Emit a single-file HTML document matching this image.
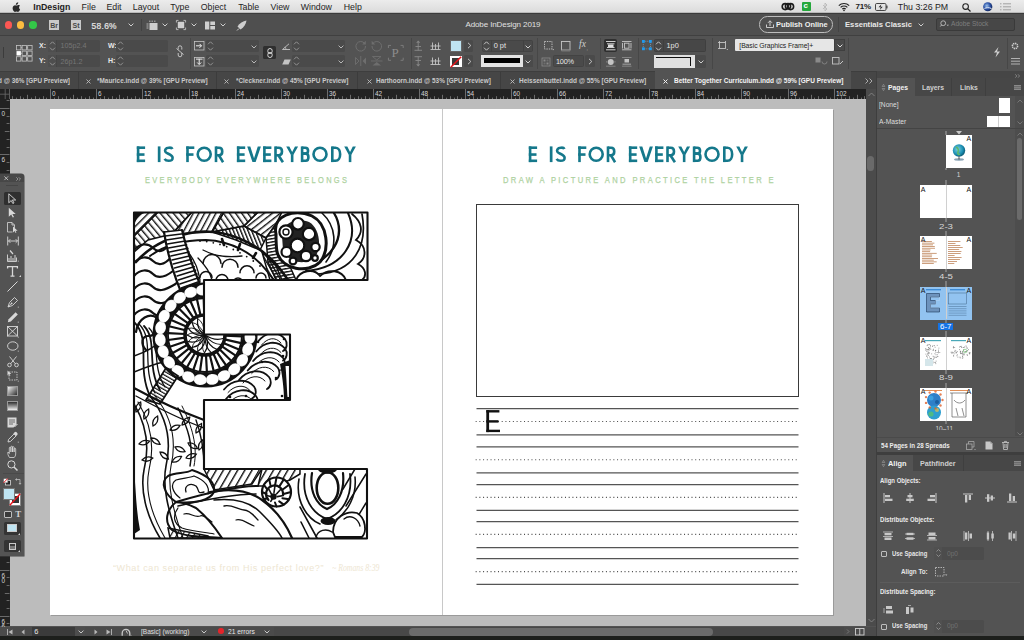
<!DOCTYPE html><html><head><meta charset="utf-8"><style>
*{margin:0;padding:0;box-sizing:border-box}
html,body{width:1024px;height:640px;overflow:hidden;background:#535353;font-family:"Liberation Sans",sans-serif}
.a{position:absolute}
.t{position:absolute;white-space:pre;line-height:1}
svg{position:absolute;overflow:visible}
</style></head><body><div class="a" style="left:0px;top:0px;width:1024px;height:13px;background:linear-gradient(#ececec,#dcdcdc);border-bottom:1px solid #b9b9b9"></div>
<svg style="left:12px;top:2px;" width="9" height="10" viewBox="0 0 9 10"><path d="M6.2 0.3c0.1 0.9-0.3 1.7-1 2.2-0.5 0.3-1 0.4-1.4 0.3 0-0.8 0.4-1.6 1-2 0.4-0.3 1-0.5 1.4-0.5zM7.9 3.6c-0.8-0.6-1.6-0.6-2.2-0.4-0.5 0.2-0.8 0.3-1.1 0.3-0.4 0-0.8-0.3-1.5-0.3C2 3.2 0.6 4.3 0.6 6.2c0 1.8 1.3 3.7 2.3 3.7 0.6 0 0.9-0.4 1.6-0.4 0.7 0 1 0.4 1.6 0.4 0.8 0 1.6-1.3 2-2.3-1.1-0.5-1.6-2.6-0.2-4z" fill="#2a2a2a"/></svg>
<div class="t" style="left:33.2px;top:3.2px;font-size:8.8px;color:#1e1e1e;font-weight:bold;width:36.099999999999994px;">InDesign</div>
<div class="t" style="left:81.6px;top:3.2px;font-size:8.8px;color:#1e1e1e;font-weight:normal;width:13.100000000000009px;">File</div>
<div class="t" style="left:106.4px;top:3.2px;font-size:8.8px;color:#1e1e1e;font-weight:normal;width:14.599999999999994px;">Edit</div>
<div class="t" style="left:132.8px;top:3.2px;font-size:8.8px;color:#1e1e1e;font-weight:normal;width:25.399999999999977px;">Layout</div>
<div class="t" style="left:170.3px;top:3.2px;font-size:8.8px;color:#1e1e1e;font-weight:normal;width:18.69999999999999px;">Type</div>
<div class="t" style="left:200.7px;top:3.2px;font-size:8.8px;color:#1e1e1e;font-weight:normal;width:25.80000000000001px;">Object</div>
<div class="t" style="left:238.2px;top:3.2px;font-size:8.8px;color:#1e1e1e;font-weight:normal;width:20.19999999999999px;">Table</div>
<div class="t" style="left:270.5px;top:3.2px;font-size:8.8px;color:#1e1e1e;font-weight:normal;width:18.5px;">View</div>
<div class="t" style="left:300.7px;top:3.2px;font-size:8.8px;color:#1e1e1e;font-weight:normal;width:31.30000000000001px;">Window</div>
<div class="t" style="left:343.7px;top:3.2px;font-size:8.8px;color:#1e1e1e;font-weight:normal;width:17.600000000000023px;">Help</div>
<div class="t" style="left:855.6px;top:3.4px;font-size:8px;color:#222;font-weight:bold;letter-spacing:-0.3px;">71%</div>
<div class="t" style="left:897.8px;top:3.2px;font-size:8.8px;color:#1e1e1e;font-weight:normal;">Thu 3:26 PM</div>
<svg style="left:781px;top:2px;" width="14" height="9" viewBox="0 0 14 9"><g fill="none" stroke="#1b1b1b" stroke-width="1.6"><circle cx="4.2" cy="4.6" r="3"/><circle cx="9.6" cy="4.6" r="3"/><circle cx="7" cy="4.2" r="2.6"/></g></svg>
<div class="a" style="left:801.5px;top:1.8px;width:9.5px;height:9.5px;background:#25a73c;border-radius:1px"></div>
<div class="t" style="left:803.6px;top:2.3px;font-size:8px;color:#fff;font-weight:bold;">c</div>
<svg style="left:822px;top:2px;" width="6" height="10" viewBox="0 0 6 10"><path d="M1 3l4 4-2 2V1l2 2-4 4" fill="none" stroke="#b9b9b9" stroke-width="0.9"/></svg>
<svg style="left:837.5px;top:2px;" width="12" height="9" viewBox="0 0 12 9"><g fill="none" stroke="#222" stroke-width="1.2"><path d="M0.8 3.6a7.5 7.5 0 0 1 10.4 0"/><path d="M2.6 5.4a5 5 0 0 1 6.8 0"/><path d="M4.3 7.1a2.4 2.4 0 0 1 3.4 0"/></g><circle cx="6" cy="8.4" r="0.8" fill="#222"/></svg>
<svg style="left:874.7px;top:2.5px;" width="13" height="8" viewBox="0 0 13 8"><rect x="0.5" y="0.5" width="10.5" height="7" rx="1.2" fill="none" stroke="#333" stroke-width="0.9"/><rect x="11.3" y="2.6" width="1.2" height="2.8" fill="#333"/><path d="M6.4 1.2L3.6 4.3h2.2L4.8 7l2.9-3.2H5.6z" fill="#222"/></svg>
<svg style="left:962.3px;top:2.5px;" width="9" height="9" viewBox="0 0 9 9"><circle cx="3.6" cy="3.6" r="2.8" fill="none" stroke="#222" stroke-width="1.1"/><path d="M5.6 5.6L8.5 8.5" stroke="#222" stroke-width="1.3"/></svg>
<svg style="left:983px;top:1.8px;" width="9.5" height="9.5" viewBox="0 0 9.5 9.5"><defs><radialGradient id="av" cx="0.4" cy="0.4" r="0.7"><stop offset="0" stop-color="#9ec3ea"/><stop offset="0.5" stop-color="#2b52a8"/><stop offset="1" stop-color="#0c1a45"/></radialGradient></defs><circle cx="4.75" cy="4.75" r="4.6" fill="url(#av)"/><path d="M1.5 6.5c1.5-1 4.5-1.2 7 0" stroke="#e8eef8" stroke-width="1" fill="none"/></svg>
<svg style="left:999.5px;top:3px;" width="11" height="8" viewBox="0 0 11 8"><g stroke="#9a9a9a" stroke-width="0.9"><path d="M0 0.8h1.5M3 0.8h8M0 3.8h1.5M3 3.8h8M0 6.8h1.5M3 6.8h8"/></g></svg>
<div class="a" style="left:0px;top:13px;width:1024px;height:22px;background:#4f4f4f;border-top:1px solid #3b3b3b"></div>
<div class="a" style="left:4.8px;top:21.3px;width:7.4px;height:7.4px;background:#fc5753;border-radius:50%"></div>
<div class="a" style="left:16.900000000000002px;top:21.3px;width:7.4px;height:7.4px;background:#fdbc40;border-radius:50%"></div>
<div class="a" style="left:29.3px;top:21.3px;width:7.4px;height:7.4px;background:#33c748;border-radius:50%"></div>
<div class="a" style="left:49px;top:20px;width:10.3px;height:9.5px;background:#c9c9c9"></div>
<div class="t" style="left:50.3px;top:21.9px;font-size:7px;color:#4a4a4a;font-weight:bold;">Br</div>
<div class="a" style="left:71.1px;top:20px;width:10.1px;height:9.5px;background:#c9c9c9"></div>
<div class="t" style="left:72.6px;top:21.9px;font-size:7px;color:#4a4a4a;font-weight:bold;">St</div>
<div class="t" style="left:91.6px;top:22px;font-size:8.4px;color:#e6e6e6;font-weight:normal;letter-spacing:0.3px;-webkit-text-stroke:0.2px #e6e6e6;">58.6%</div>
<svg style="left:128px;top:22.5px;" width="6" height="4" viewBox="0 0 6 4"><path d="M0.6 0.6L3 3 5.4 0.6" fill="none" stroke="#cfcfcf" stroke-width="1.0"/></svg>
<div class="a" style="left:141px;top:19px;width:1px;height:12px;background:#424242"></div>
<svg style="left:146.3px;top:19.5px;" width="12" height="11" viewBox="0 0 12 11"><rect x="3.5" y="3" width="8" height="7" fill="#cfcfcf"/><g stroke="#cfcfcf" stroke-width="0.8"><path d="M0.5 4h2M0.5 6h2M0.5 8h2M3 1.2h1.5M5.5 1.2h1.5M8 1.2h1.5"/></g></svg>
<svg style="left:161.5px;top:22.5px;" width="6" height="4" viewBox="0 0 6 4"><path d="M0.6 0.6L3 3 5.4 0.6" fill="none" stroke="#cfcfcf" stroke-width="1.0"/></svg>
<svg style="left:176.4px;top:20px;" width="10" height="10" viewBox="0 0 10 10"><rect x="1.8" y="1.8" width="6.4" height="6.4" fill="#cfcfcf"/><g stroke="#cfcfcf" stroke-width="0.8" fill="none"><path d="M0.4 2.5V0.4h2.1M7.5 0.4h2.1v2.1M9.6 7.5v2.1H7.5M2.5 9.6H0.4V7.5"/></g></svg>
<svg style="left:190.6px;top:22.5px;" width="6" height="4" viewBox="0 0 6 4"><path d="M0.6 0.6L3 3 5.4 0.6" fill="none" stroke="#cfcfcf" stroke-width="1.0"/></svg>
<svg style="left:205px;top:20.5px;" width="10" height="9" viewBox="0 0 10 9"><rect x="0" y="0.5" width="4.3" height="8" fill="#cfcfcf"/><rect x="5.3" y="0.5" width="4.7" height="3.5" fill="#cfcfcf"/><rect x="5.3" y="5" width="4.7" height="3.5" fill="#cfcfcf"/></svg>
<svg style="left:219.6px;top:22.5px;" width="6" height="4" viewBox="0 0 6 4"><path d="M0.6 0.6L3 3 5.4 0.6" fill="none" stroke="#cfcfcf" stroke-width="1.0"/></svg>
<svg style="left:235.5px;top:19.5px;" width="11" height="11" viewBox="0 0 11 11"><path d="M10.5 0.5C7 1 3.5 3 1.5 6.5l3 3C8 7.5 10 4 10.5 0.5z" fill="#cfcfcf"/><path d="M0.5 7.5l2.5 3" stroke="#4f4f4f" stroke-width="1.2"/><path d="M1 10.5l2-2" stroke="#cfcfcf" stroke-width="1"/></svg>
<div class="t" style="left:465.4px;top:20.8px;font-size:8.0px;color:#e0e0e0;font-weight:normal;width:77px;letter-spacing:-0.1px;">Adobe InDesign 2019</div>
<div class="a" style="left:758.8px;top:16px;width:74.7px;height:16.6px;border:1px solid #bdbdbd;border-radius:8.3px"></div>
<svg style="left:765.5px;top:19.8px;" width="8" height="8" viewBox="0 0 8 8"><g fill="none" stroke="#d8d8d8" stroke-width="0.9"><path d="M0.5 4.5v3h7v-3"/><path d="M4 6V0.8M2 2.8L4 0.8 6 2.8"/></g></svg>
<div class="t" style="left:776px;top:21.2px;font-size:7.6px;color:#f0f0f0;font-weight:bold;transform-origin:0 0;transform:scaleX(0.9704);">Publish Online</div>
<div class="a" style="left:837.5px;top:17px;width:1px;height:15px;background:#444"></div>
<div class="t" style="left:845px;top:21.0px;font-size:7.9px;color:#e8e8e8;font-weight:bold;transform-origin:0 0;transform:scaleX(0.9728);">Essentials Classic</div>
<svg style="left:917.5px;top:22.5px;" width="6" height="4" viewBox="0 0 6 4"><path d="M0.6 0.6L3 3 5.4 0.6" fill="none" stroke="#cfcfcf" stroke-width="1.0"/></svg>
<div class="a" style="left:936px;top:17.9px;width:79px;height:12.8px;background:#474747;border:1px solid #3a3a3a;border-radius:2px"></div>
<svg style="left:939.5px;top:20px;" width="10" height="8" viewBox="0 0 10 8"><circle cx="3.2" cy="3.2" r="2.4" fill="none" stroke="#bcbcbc" stroke-width="0.9"/><path d="M1.6 5L0.3 6.5" stroke="#bcbcbc" stroke-width="1"/><path d="M6.5 4.8l1.3 1.2 1.3-1.2z" fill="#bcbcbc"/></svg>
<div class="t" style="left:951px;top:20.9px;font-size:6.6px;color:#7e7e7e;font-weight:normal;">Adobe Stock</div>
<div class="a" style="left:0px;top:35px;width:1024px;height:36px;background:#535353;border-top:1px solid #404040"></div>
<div class="a" style="left:3px;top:46.7px;width:1px;height:11.7px;background:#3c3c3c"></div>
<svg style="left:16px;top:44.7px;" width="16" height="16" viewBox="0 0 16 16"><rect x="0.5" y="0.5" width="4.4" height="4.4" fill="none" stroke="#c4c4c4" stroke-width="0.8"/><rect x="0.5" y="6.1" width="4.4" height="4.4" fill="#fff"/><rect x="0.5" y="11.7" width="4.4" height="4.4" fill="none" stroke="#c4c4c4" stroke-width="0.8"/><rect x="6.1" y="0.5" width="4.4" height="4.4" fill="none" stroke="#c4c4c4" stroke-width="0.8"/><rect x="6.1" y="6.1" width="4.4" height="4.4" fill="none" stroke="#c4c4c4" stroke-width="0.8"/><rect x="6.1" y="11.7" width="4.4" height="4.4" fill="none" stroke="#c4c4c4" stroke-width="0.8"/><rect x="11.7" y="0.5" width="4.4" height="4.4" fill="none" stroke="#c4c4c4" stroke-width="0.8"/><rect x="11.7" y="6.1" width="4.4" height="4.4" fill="none" stroke="#c4c4c4" stroke-width="0.8"/><rect x="11.7" y="11.7" width="4.4" height="4.4" fill="none" stroke="#c4c4c4" stroke-width="0.8"/><path d="M4.9 2.7h1.2" stroke="#c4c4c4" stroke-width="0.8"/><path d="M10.5 2.7h1.2" stroke="#c4c4c4" stroke-width="0.8"/><path d="M4.9 8.3h1.2" stroke="#c4c4c4" stroke-width="0.8"/><path d="M10.5 8.3h1.2" stroke="#c4c4c4" stroke-width="0.8"/><path d="M4.9 13.899999999999999h1.2" stroke="#c4c4c4" stroke-width="0.8"/><path d="M10.5 13.899999999999999h1.2" stroke="#c4c4c4" stroke-width="0.8"/></svg>
<div class="t" style="left:39px;top:42.3px;font-size:7px;color:#e8e8e8;font-weight:bold;">X:</div>
<div class="t" style="left:39px;top:56.8px;font-size:7px;color:#e8e8e8;font-weight:bold;">Y:</div>
<div class="a" style="left:47.5px;top:39.5px;width:52.1px;height:12px;background:#4a4a4a;border-radius:1.5px"></div>
<div class="a" style="left:47.5px;top:39.5px;width:9.1px;height:12px;background:#4e4e4e;border-right:1px solid #454545"></div>
<div class="a" style="left:47.5px;top:55.2px;width:52.1px;height:12px;background:#4a4a4a;border-radius:1.5px"></div>
<div class="a" style="left:47.5px;top:55.2px;width:9.1px;height:12px;background:#4e4e4e;border-right:1px solid #454545"></div>
<svg style="left:47.5px;top:39.5px;" width="9" height="12" viewBox="0 0 9 12"><g fill="none" stroke="#9a9a9a" stroke-width="0.9"><path d="M2 4.3L4.5 1.8 7 4.3M2 7.7L4.5 10.2 7 7.7"/></g></svg>
<svg style="left:47.5px;top:55.2px;" width="9" height="12" viewBox="0 0 9 12"><g fill="none" stroke="#9a9a9a" stroke-width="0.9"><path d="M2 4.3L4.5 1.8 7 4.3M2 7.7L4.5 10.2 7 7.7"/></g></svg>
<div class="t" style="left:60.5px;top:42.3px;font-size:7.2px;color:#767676;font-weight:normal;">105p2.4</div>
<div class="t" style="left:60.5px;top:58px;font-size:7.2px;color:#767676;font-weight:normal;">26p1.2</div>
<div class="t" style="left:108px;top:42.3px;font-size:7px;color:#e8e8e8;font-weight:bold;">W:</div>
<div class="t" style="left:108px;top:56.8px;font-size:7px;color:#e8e8e8;font-weight:bold;">H:</div>
<div class="a" style="left:116.2px;top:39.5px;width:51.8px;height:12px;background:#4a4a4a;border-radius:1.5px"></div>
<div class="a" style="left:116.2px;top:55.2px;width:51.8px;height:12px;background:#4a4a4a;border-radius:1.5px"></div>
<svg style="left:116.2px;top:39.5px;" width="9" height="12" viewBox="0 0 9 12"><g fill="none" stroke="#9a9a9a" stroke-width="0.9"><path d="M2 4.3L4.5 1.8 7 4.3M2 7.7L4.5 10.2 7 7.7"/></g></svg>
<svg style="left:116.2px;top:55.2px;" width="9" height="12" viewBox="0 0 9 12"><g fill="none" stroke="#9a9a9a" stroke-width="0.9"><path d="M2 4.3L4.5 1.8 7 4.3M2 7.7L4.5 10.2 7 7.7"/></g></svg>
<svg style="left:175.5px;top:44.5px;" width="8" height="13" viewBox="0 0 8 13"><g fill="none" stroke="#c4c4c4" stroke-width="1"><path d="M2.2 4.5V2.6a1.8 1.8 0 0 1 3.6 0v2M2.2 8v2a1.8 1.8 0 0 0 3.6 0V8"/><path d="M0.5 3.5L7.5 9.5"/></g></svg>
<div class="a" style="left:189.9px;top:38px;width:1px;height:31px;background:#474747"></div>
<svg style="left:193.8px;top:40.8px;" width="10.5" height="9.5" viewBox="0 0 10.5 9.5"><rect x="0.5" y="0.5" width="9.5" height="8.5" fill="none" stroke="#c4c4c4" stroke-width="0.8"/><path d="M2 4.8h5.5M5.5 2.8l2 2-2 2" fill="none" stroke="#eee" stroke-width="1"/></svg>
<svg style="left:193.8px;top:56.8px;" width="10.5" height="9.5" viewBox="0 0 10.5 9.5"><rect x="0.5" y="0.5" width="9.5" height="8.5" fill="none" stroke="#c4c4c4" stroke-width="0.8"/><path d="M5.2 1.8v5.5M3.2 5.5l2 2 2-2" fill="none" stroke="#eee" stroke-width="1"/><rect x="2" y="1.6" width="6.5" height="1" fill="#eee"/></svg>
<div class="a" style="left:206px;top:39.5px;width:52.8px;height:12px;background:#4a4a4a;border-radius:1.5px"></div>
<div class="a" style="left:206px;top:55px;width:52.8px;height:12px;background:#4a4a4a;border-radius:1.5px"></div>
<svg style="left:206px;top:39.5px;" width="9" height="12" viewBox="0 0 9 12"><g fill="none" stroke="#9a9a9a" stroke-width="0.9"><path d="M2 4.3L4.5 1.8 7 4.3M2 7.7L4.5 10.2 7 7.7"/></g></svg>
<svg style="left:206px;top:55px;" width="9" height="12" viewBox="0 0 9 12"><g fill="none" stroke="#9a9a9a" stroke-width="0.9"><path d="M2 4.3L4.5 1.8 7 4.3M2 7.7L4.5 10.2 7 7.7"/></g></svg>
<svg style="left:250.8px;top:44.5px;" width="6" height="4" viewBox="0 0 6 4"><path d="M0.6 0.6L3 3 5.4 0.6" fill="none" stroke="#b8b8b8" stroke-width="1.0"/></svg>
<svg style="left:250.8px;top:59.5px;" width="6" height="4" viewBox="0 0 6 4"><path d="M0.6 0.6L3 3 5.4 0.6" fill="none" stroke="#b8b8b8" stroke-width="1.0"/></svg>
<div class="a" style="left:263px;top:46px;width:12.8px;height:13.4px;background:#2f2f2f;border-radius:1.5px"></div>
<svg style="left:266.5px;top:47.8px;" width="6" height="10" viewBox="0 0 6 10"><g fill="none" stroke="#e8e8e8" stroke-width="0.9"><rect x="0.8" y="0.5" width="4.4" height="5" rx="2.2"/><rect x="0.8" y="4.5" width="4.4" height="5" rx="2.2"/></g></svg>
<svg style="left:281.5px;top:42.5px;" width="8.5" height="7" viewBox="0 0 8.5 7"><path d="M0.5 6.5h7.5M0.5 6.5L7 0.8" fill="none" stroke="#c4c4c4" stroke-width="0.9"/><path d="M4 6.5a3.5 3.5 0 0 0-1.2-2.6" fill="none" stroke="#c4c4c4" stroke-width="0.8"/></svg>
<svg style="left:281.5px;top:58.5px;" width="9" height="6" viewBox="0 0 9 6"><path d="M2.5 0.5H8.8L6.5 5.5H0.2z" fill="#c4c4c4"/></svg>
<div class="a" style="left:292.4px;top:39.5px;width:53.1px;height:12px;background:#4a4a4a;border-radius:1.5px"></div>
<div class="a" style="left:292.4px;top:55px;width:53.1px;height:12px;background:#4a4a4a;border-radius:1.5px"></div>
<svg style="left:292.4px;top:39.5px;" width="9" height="12" viewBox="0 0 9 12"><g fill="none" stroke="#9a9a9a" stroke-width="0.9"><path d="M2 4.3L4.5 1.8 7 4.3M2 7.7L4.5 10.2 7 7.7"/></g></svg>
<svg style="left:292.4px;top:55px;" width="9" height="12" viewBox="0 0 9 12"><g fill="none" stroke="#9a9a9a" stroke-width="0.9"><path d="M2 4.3L4.5 1.8 7 4.3M2 7.7L4.5 10.2 7 7.7"/></g></svg>
<svg style="left:337.5px;top:44.5px;" width="6" height="4" viewBox="0 0 6 4"><path d="M0.6 0.6L3 3 5.4 0.6" fill="none" stroke="#b8b8b8" stroke-width="1.0"/></svg>
<svg style="left:337.5px;top:59.5px;" width="6" height="4" viewBox="0 0 6 4"><path d="M0.6 0.6L3 3 5.4 0.6" fill="none" stroke="#b8b8b8" stroke-width="1.0"/></svg>
<svg style="left:354.5px;top:40px;" width="11.5" height="11.5" viewBox="0 0 11.5 11.5"><path d="M9.6 3.5A4.8 4.8 0 1 0 10.5 6" fill="none" stroke="#6e6e6e" stroke-width="1"/><path d="M10.8 0.8v3.6H7.2z" fill="#6e6e6e"/></svg>
<svg style="left:370.5px;top:40px;" width="11.5" height="11.5" viewBox="0 0 11.5 11.5"><path d="M1.9 3.5A4.8 4.8 0 1 1 1 6" fill="none" stroke="#6e6e6e" stroke-width="1"/><path d="M0.7 0.8v3.6h3.6z" fill="#6e6e6e"/></svg>
<svg style="left:354.5px;top:56px;" width="11.5" height="10" viewBox="0 0 11.5 10"><g fill="none" stroke="#6e6e6e" stroke-width="0.9"><path d="M5.75 0v10M0.5 1.5v7l3.5-3.5z"/></g><path d="M11 1.5v7L7.5 5z" fill="#6e6e6e"/></svg>
<svg style="left:370.5px;top:56px;" width="11.5" height="10" viewBox="0 0 11.5 10"><g fill="none" stroke="#6e6e6e" stroke-width="0.9"><path d="M0 5h11.5M1.5 0.5h8.5L5.75 4z"/></g><path d="M1.5 9.5h8.5L5.75 6z" fill="#6e6e6e"/></svg>
<svg style="left:387.8px;top:44.7px;" width="15.6" height="15.7" viewBox="0 0 15.6 15.7"><g fill="none" stroke="#858585" stroke-width="0.8"><path d="M0.4 3V0.4H3M12.6 0.4h2.6V3M15.2 12.7v2.6h-2.6M3 15.3H0.4v-2.6"/></g></svg>
<div class="t" style="left:391.5px;top:45.8px;font-size:13px;color:#8c8c8c;font-weight:normal;font-family:'Liberation Serif';">P</div>
<div class="a" style="left:411px;top:38px;width:1px;height:31px;background:#474747"></div>
<svg style="left:414px;top:40px;" width="8.5" height="11" viewBox="0 0 8.5 11"><path d="M4.2 0.5l2 2.2h-4z" fill="#8a8a8a"/><g stroke="#8a8a8a" stroke-width="0.9" fill="none"><path d="M4.2 3v7.5M1.5 6.5h5.5M0.5 10.3h7.5"/></g></svg>
<svg style="left:429.8px;top:42px;" width="11" height="8" viewBox="0 0 11 8"><g stroke="#c4c4c4" stroke-width="0.9" fill="none"><path d="M2.5 0.5v7M5.5 2v5.5M8.5 0.5v7M0.5 4h10M0.5 7.5h10"/></g></svg>
<svg style="left:414px;top:56px;" width="8.5" height="11" viewBox="0 0 8.5 11"><path d="M4.2 10.5l2-2.2h-4z" fill="#8a8a8a"/><g stroke="#8a8a8a" stroke-width="0.9" fill="none"><path d="M4.2 0.5v7.5M1.5 4.5h5.5M0.5 0.7h7.5"/></g></svg>
<svg style="left:429.8px;top:57px;" width="11" height="8" viewBox="0 0 11 8"><g stroke="#c4c4c4" stroke-width="0.9" fill="none"><path d="M2.5 0.5v7M5.5 2v5.5M8.5 0.5v7M0.5 4h10M0.5 7.5h10"/></g></svg>
<div class="a" style="left:449.7px;top:39.5px;width:11.9px;height:12.1px;background:#bfe4f2;border:1px solid #666"></div>
<div class="a" style="left:464.4px;top:39.5px;width:9px;height:12px;background:#4a4a4a;border-radius:1.5px"></div>
<svg style="left:467px;top:42px;" width="5" height="7" viewBox="0 0 5 7"><path d="M1 0.8L3.8 3.5 1 6.2" fill="none" stroke="#d0d0d0" stroke-width="0.9"/></svg>
<div class="a" style="left:449.7px;top:55.5px;width:11.9px;height:11.7px;background:#fff"></div>
<div class="a" style="left:452.2px;top:58px;width:7px;height:6.8px;background:#3a3a3a"></div>
<svg style="left:449.7px;top:55.5px;" width="12" height="12" viewBox="0 0 12 12"><path d="M0.8 11.2L11.2 0.8" stroke="#e8141b" stroke-width="1.5"/></svg>
<div class="a" style="left:464.4px;top:55.2px;width:9px;height:12px;background:#4a4a4a;border-radius:1.5px"></div>
<svg style="left:467px;top:57.8px;" width="5" height="7" viewBox="0 0 5 7"><path d="M1 0.8L3.8 3.5 1 6.2" fill="none" stroke="#d0d0d0" stroke-width="0.9"/></svg>
<div class="a" style="left:481.6px;top:39.5px;width:51.7px;height:12px;background:#4a4a4a;border-radius:1.5px;border:1px solid #434343"></div>
<div class="a" style="left:491px;top:39.5px;width:1px;height:12px;background:#414141"></div>
<div class="a" style="left:522.6px;top:39.5px;width:1px;height:12px;background:#414141"></div>
<svg style="left:482.4px;top:39.5px;" width="9" height="12" viewBox="0 0 9 12"><g fill="none" stroke="#cfcfcf" stroke-width="0.9"><path d="M2 4.3L4.5 1.8 7 4.3M2 7.7L4.5 10.2 7 7.7"/></g></svg>
<div class="t" style="left:493.7px;top:42.2px;font-size:7.4px;color:#e6e6e6;font-weight:normal;">0 pt</div>
<svg style="left:525px;top:44.5px;" width="6" height="4" viewBox="0 0 6 4"><path d="M0.6 0.6L3 3 5.4 0.6" fill="none" stroke="#cfcfcf" stroke-width="1.0"/></svg>
<div class="a" style="left:481px;top:55.2px;width:41.6px;height:12.3px;background:#e3e3e3"></div>
<div class="a" style="left:483.5px;top:58.3px;width:36.5px;height:5px;background:#000"></div>
<div class="a" style="left:522.6px;top:55.2px;width:10.7px;height:12.3px;background:#4a4a4a"></div>
<svg style="left:525px;top:59.5px;" width="6" height="4" viewBox="0 0 6 4"><path d="M0.6 0.6L3 3 5.4 0.6" fill="none" stroke="#cfcfcf" stroke-width="1.0"/></svg>
<div class="a" style="left:537.2px;top:38px;width:1px;height:31px;background:#474747"></div>
<svg style="left:543.5px;top:41px;" width="10" height="10" viewBox="0 0 10 10"><g fill="none" stroke="#c4c4c4" stroke-width="0.9" stroke-dasharray="1.4 1"><rect x="0.5" y="0.5" width="7.5" height="7.5"/></g><path d="M8.6 8.6h1.2" stroke="#c4c4c4"/></svg>
<svg style="left:560.7px;top:40.5px;" width="9.5" height="11" viewBox="0 0 9.5 11"><rect x="0.5" y="0.5" width="8.5" height="8.5" fill="none" stroke="#c4c4c4" stroke-width="0.9"/><rect x="0.5" y="8.5" width="8.5" height="2" fill="#777"/></svg>
<div class="t" style="left:579px;top:40.3px;font-size:9.5px;color:#d0d0d0;font-weight:normal;font-style:italic;font-family:'Liberation Serif';">fx</div>
<div class="t" style="left:586.5px;top:46px;font-size:5px;color:#bdbdbd;font-weight:normal;">,</div>
<svg style="left:542px;top:57.5px;" width="8" height="8" viewBox="0 0 8 8"><g fill="#8a8a8a"><rect x="0" y="0" width="8" height="8" fill="none" stroke="#8a8a8a" stroke-width="0.8"/><rect x="1.5" y="1.5" width="2" height="2"/><rect x="4.5" y="4.5" width="2" height="2"/><rect x="4.5" y="1.5" width="2" height="2" opacity="0.5"/><rect x="1.5" y="4.5" width="2" height="2" opacity="0.5"/></g></svg>
<div class="a" style="left:553.3px;top:55px;width:30.7px;height:12.4px;background:#4a4a4a;border-radius:1.5px;border:1px solid #434343"></div>
<div class="t" style="left:556px;top:58px;font-size:7.3px;color:#e6e6e6;font-weight:normal;letter-spacing:-0.2px;">100%</div>
<div class="a" style="left:585px;top:55px;width:10px;height:12.4px;background:#4a4a4a;border-radius:1.5px"></div>
<svg style="left:587.5px;top:58px;" width="5" height="7" viewBox="0 0 5 7"><path d="M1 0.8L3.8 3.5 1 6.2" fill="none" stroke="#d0d0d0" stroke-width="0.9"/></svg>
<div class="a" style="left:599.6px;top:38px;width:1px;height:31px;background:#474747"></div>
<div class="a" style="left:603.5px;top:38.9px;width:13.1px;height:12.7px;background:#2f2f2f;border-radius:2px"></div>
<svg style="left:605.5px;top:40.5px;" width="9.5" height="9.5" viewBox="0 0 9.5 9.5"><g stroke="#e0e0e0" stroke-width="0.9"><path d="M0 0.5h9.5M0 8.8h9.5M1 2.8h7.5M1 6.5h7.5"/></g><rect x="2" y="3.5" width="5.5" height="2.5" fill="#e0e0e0"/></svg>
<svg style="left:622px;top:40.5px;" width="9.5" height="9.5" viewBox="0 0 9.5 9.5"><g stroke="#c4c4c4" stroke-width="0.9" fill="none"><path d="M0 0.5h9.5M0 8.8h9.5M0.5 2v5.5M9 2v5.5"/><rect x="2.5" y="2.2" width="4.5" height="5"/></g></svg>
<svg style="left:606px;top:56.5px;" width="9.5" height="10" viewBox="0 0 9.5 10"><g stroke="#8a8a8a" stroke-width="0.9"><path d="M0 0.5h9.5M0 9.2h9.5"/></g><circle cx="4.75" cy="4.9" r="3" fill="#c4c4c4"/><path d="M0 4.9h1.2M8.3 4.9h1.2" stroke="#8a8a8a"/></svg>
<svg style="left:622px;top:56.5px;" width="9.5" height="10" viewBox="0 0 9.5 10"><g stroke="#8a8a8a" stroke-width="0.9"><path d="M0 0.5h9.5M0 9.2h9.5"/></g><rect x="2.5" y="2" width="4.5" height="3.5" fill="#c4c4c4"/><rect x="0.5" y="6.5" width="8.5" height="1.6" fill="#8a8a8a"/></svg>
<div class="a" style="left:637.7px;top:38px;width:1px;height:31px;background:#474747"></div>
<svg style="left:641.6px;top:40px;" width="10" height="10.5" viewBox="0 0 10 10.5"><rect x="1.3" y="1.3" width="7.2" height="7.6" fill="none" stroke="#8fb6d6" stroke-width="0.6" stroke-dasharray="1 1"/><g fill="#1e9bf0"><rect x="0" y="0" width="2.8" height="2.8"/><rect x="7" y="0" width="2.8" height="2.8"/><rect x="0" y="7.4" width="2.8" height="2.8"/><rect x="7" y="7.4" width="2.8" height="2.8"/></g></svg>
<div class="a" style="left:653.7px;top:39.2px;width:52.3px;height:12.6px;background:#474747;border-radius:1.5px;border:1px solid #3f3f3f"></div>
<div class="a" style="left:663px;top:39.2px;width:1px;height:12.6px;background:#3f3f3f"></div>
<svg style="left:654.2px;top:39.5px;" width="9" height="12" viewBox="0 0 9 12"><g fill="none" stroke="#cfcfcf" stroke-width="0.9"><path d="M2 4.3L4.5 1.8 7 4.3M2 7.7L4.5 10.2 7 7.7"/></g></svg>
<div class="t" style="left:666.5px;top:42.4px;font-size:7.4px;color:#e6e6e6;font-weight:normal;">1p0</div>
<div class="a" style="left:653.7px;top:55px;width:41.6px;height:12.7px;background:#e0e0e0"></div>
<div class="a" style="left:655.7px;top:57px;width:35px;height:9px;border:1px solid #111;border-left:none;border-bottom:none;background:linear-gradient(#e0e0e0,#e0e0e0)"></div>
<div class="a" style="left:689.7px;top:57px;width:1.5px;height:9px;background:#111"></div>
<div class="a" style="left:695.3px;top:55px;width:10.7px;height:12.7px;background:#4a4a4a;border-radius:1.5px"></div>
<svg style="left:697.8px;top:59.5px;" width="6" height="4" viewBox="0 0 6 4"><path d="M0.6 0.6L3 3 5.4 0.6" fill="none" stroke="#cfcfcf" stroke-width="1.0"/></svg>
<div class="a" style="left:711.9px;top:38px;width:1px;height:31px;background:#474747"></div>
<svg style="left:717.7px;top:40.5px;" width="10" height="10" viewBox="0 0 10 10"><g fill="none" stroke="#c4c4c4" stroke-width="0.9"><rect x="1.5" y="1.5" width="6" height="6"/><path d="M0 1.5h1.5M0 7.5h1.5M7.5 0v1.5M1.5 0v1.5"/></g><path d="M8.8 8.5h1" stroke="#c4c4c4"/></svg>
<div class="a" style="left:734.8px;top:39.3px;width:99.5px;height:11.9px;background:#e6e6e6;border-radius:1px"></div>
<div class="t" style="left:739.3px;top:42.8px;font-size:6.8px;color:#222;font-weight:normal;letter-spacing:-0.05px;">[Basic Graphics Frame]+</div>
<div class="a" style="left:834.3px;top:39.3px;width:10.4px;height:11.9px;background:#4a4a4a;border:1px solid #3f3f3f"></div>
<svg style="left:836.5px;top:43.5px;" width="6" height="4" viewBox="0 0 6 4"><path d="M0.6 0.6L3 3 5.4 0.6" fill="none" stroke="#dedede" stroke-width="1.0"/></svg>
<svg style="left:815px;top:57px;" width="13" height="7" viewBox="0 0 13 7"><rect x="0.5" y="0.5" width="5" height="5" fill="#8a8a8a"/><path d="M7 4.5a2.5 2.5 0 1 0 5 0" fill="none" stroke="#8a8a8a" stroke-width="0.8"/></svg>
<svg style="left:832px;top:56.5px;" width="12" height="8" viewBox="0 0 12 8"><rect x="0.5" y="0.5" width="6.5" height="6.5" fill="none" stroke="#c4c4c4" stroke-width="0.9"/><path d="M8 7l3-3" stroke="#c4c4c4" stroke-width="1"/></svg>
<div class="a" style="left:847.7px;top:38px;width:1px;height:31px;background:#474747"></div>
<svg style="left:993px;top:47.4px;" width="8" height="10.5" viewBox="0 0 8 10.5"><path d="M5.5 0L1 5.5h3L2.5 10.5 7 4.5H4z" fill="#cfcfcf"/></svg>
<div class="a" style="left:1006.5px;top:38px;width:1px;height:31px;background:#474747"></div>
<svg style="left:1011px;top:41.5px;" width="8" height="8" viewBox="0 0 8 8"><circle cx="4" cy="4" r="2.6" fill="none" stroke="#cfcfcf" stroke-width="1.6" stroke-dasharray="1.3 0.7"/><circle cx="4" cy="4" r="1.1" fill="#535353"/></svg>
<svg style="left:1010.5px;top:58px;" width="9" height="7" viewBox="0 0 9 7"><g stroke="#bdbdbd" stroke-width="0.9"><path d="M0 0.5h9M0 3.2h9M0 6h9"/></g></svg>
<div class="a" style="left:0px;top:71px;width:877px;height:18px;background:#464646;border-top:1px solid #3e3e3e"></div>
<div class="a" style="left:0px;top:78px;width:69.7px;height:10px;overflow:hidden">
<div class="t" style="left:-2.3px;top:0px;font-size:6.6px;color:#c9c9c9;font-weight:bold;transform-origin:0 0;transform:scaleX(0.9652);">d @ 36% [GPU Preview]</div>
</div>
<div class="a" style="left:77.6px;top:72px;width:1px;height:17px;background:#3c3c3c"></div>
<svg style="left:85.8px;top:78.5px;" width="5" height="5" viewBox="0 0 5 5"><path d="M0.5 0.5l4 4M4.5 0.5l-4 4" stroke="#bdbdbd" stroke-width="0.9"/></svg>
<div class="t" style="left:96.7px;top:78px;font-size:6.6px;color:#c9c9c9;font-weight:bold;transform-origin:0 0;transform:scaleX(0.9728);">*Maurice.indd @ 39% [GPU Preview]</div>
<div class="a" style="left:216.2px;top:72px;width:1px;height:17px;background:#3c3c3c"></div>
<svg style="left:224.1px;top:78.5px;" width="5" height="5" viewBox="0 0 5 5"><path d="M0.5 0.5l4 4M4.5 0.5l-4 4" stroke="#bdbdbd" stroke-width="0.9"/></svg>
<div class="t" style="left:235.9px;top:78px;font-size:6.6px;color:#c9c9c9;font-weight:bold;transform-origin:0 0;transform:scaleX(0.9658);">*Cleckner.indd @ 45% [GPU Preview]</div>
<div class="a" style="left:357px;top:72px;width:1px;height:17px;background:#3c3c3c"></div>
<svg style="left:366.5px;top:78.5px;" width="5" height="5" viewBox="0 0 5 5"><path d="M0.5 0.5l4 4M4.5 0.5l-4 4" stroke="#bdbdbd" stroke-width="0.9"/></svg>
<div class="t" style="left:376.2px;top:78px;font-size:6.6px;color:#c9c9c9;font-weight:bold;transform-origin:0 0;transform:scaleX(0.9713);">Harthoorn.indd @ 53% [GPU Preview]</div>
<div class="a" style="left:500px;top:72px;width:1px;height:17px;background:#3c3c3c"></div>
<svg style="left:509.5px;top:78.5px;" width="5" height="5" viewBox="0 0 5 5"><path d="M0.5 0.5l4 4M4.5 0.5l-4 4" stroke="#bdbdbd" stroke-width="0.9"/></svg>
<div class="t" style="left:519.2px;top:78px;font-size:6.6px;color:#c9c9c9;font-weight:bold;transform-origin:0 0;transform:scaleX(0.9811);">Heissenbuttel.indd @ 55% [GPU Preview]</div>
<div class="a" style="left:655px;top:72px;width:1px;height:17px;background:#3c3c3c"></div>
<div class="a" style="left:655px;top:71px;width:195.5px;height:18px;background:#535353"></div>
<svg style="left:663px;top:78.5px;" width="5" height="5" viewBox="0 0 5 5"><path d="M0.5 0.5l4 4M4.5 0.5l-4 4" stroke="#f0f0f0" stroke-width="1"/></svg>
<div class="t" style="left:673.8px;top:78px;font-size:6.6px;color:#f4f4f4;font-weight:bold;transform-origin:0 0;transform:scaleX(0.9853);">Better Together Curriculum.indd @ 59% [GPU Preview]</div>
<svg style="left:865px;top:77.5px;" width="8" height="6" viewBox="0 0 8 6"><path d="M0.5 0.5L3 3 0.5 5.5M4.5 0.5L7 3 4.5 5.5" fill="none" stroke="#b5b5b5" stroke-width="0.9"/></svg>
<div class="a" style="left:0px;top:89px;width:866px;height:10px;background:#222"></div>
<div class="a" style="left:0px;top:99px;width:9.5px;height:527px;background:#222"></div>
<svg style="left:0px;top:89px;" width="10" height="10" viewBox="0 0 10 10"><g stroke="#6a6a6a" stroke-width="0.8"><path d="M0 5.2h9.5M5.2 0v10M9.5 0v10"/></g></svg>
<svg style="left:0px;top:89px;" width="866" height="10" viewBox="0 0 866 10"><g stroke="#6c6c6c" stroke-width="1"><path d="M12.50 7.2v2.8"/><path d="M16.50 8.6v1.4"/><path d="M20.50 7.2v2.8"/><path d="M23.50 8.6v1.4"/><path d="M27.50 5.8v4.2"/><path d="M31.50 8.6v1.4"/><path d="M35.50 7.2v2.8"/><path d="M39.50 8.6v1.4"/><path d="M43.50 7.2v2.8"/><path d="M46.50 8.6v1.4"/><path d="M50.50 0v10"/><path d="M54.50 8.6v1.4"/><path d="M58.50 7.2v2.8"/><path d="M62.50 8.6v1.4"/><path d="M66.50 7.2v2.8"/><path d="M70.50 8.6v1.4"/><path d="M73.50 5.8v4.2"/><path d="M77.50 8.6v1.4"/><path d="M81.50 7.2v2.8"/><path d="M85.50 8.6v1.4"/><path d="M89.50 7.2v2.8"/><path d="M93.50 8.6v1.4"/><path d="M96.50 0v10"/><path d="M100.50 8.6v1.4"/><path d="M104.50 7.2v2.8"/><path d="M108.50 8.6v1.4"/><path d="M112.50 7.2v2.8"/><path d="M116.50 8.6v1.4"/><path d="M119.50 5.8v4.2"/><path d="M123.50 8.6v1.4"/><path d="M127.50 7.2v2.8"/><path d="M131.50 8.6v1.4"/><path d="M135.50 7.2v2.8"/><path d="M139.50 8.6v1.4"/><path d="M142.50 0v10"/><path d="M146.50 8.6v1.4"/><path d="M150.50 7.2v2.8"/><path d="M154.50 8.6v1.4"/><path d="M158.50 7.2v2.8"/><path d="M162.50 8.6v1.4"/><path d="M166.50 5.8v4.2"/><path d="M169.50 8.6v1.4"/><path d="M173.50 7.2v2.8"/><path d="M177.50 8.6v1.4"/><path d="M181.50 7.2v2.8"/><path d="M185.50 8.6v1.4"/><path d="M189.50 0v10"/><path d="M192.50 8.6v1.4"/><path d="M196.50 7.2v2.8"/><path d="M200.50 8.6v1.4"/><path d="M204.50 7.2v2.8"/><path d="M208.50 8.6v1.4"/><path d="M212.50 5.8v4.2"/><path d="M215.50 8.6v1.4"/><path d="M219.50 7.2v2.8"/><path d="M223.50 8.6v1.4"/><path d="M227.50 7.2v2.8"/><path d="M231.50 8.6v1.4"/><path d="M235.50 0v10"/><path d="M238.50 8.6v1.4"/><path d="M242.50 7.2v2.8"/><path d="M246.50 8.6v1.4"/><path d="M250.50 7.2v2.8"/><path d="M254.50 8.6v1.4"/><path d="M258.50 5.8v4.2"/><path d="M262.50 8.6v1.4"/><path d="M265.50 7.2v2.8"/><path d="M269.50 8.6v1.4"/><path d="M273.50 7.2v2.8"/><path d="M277.50 8.6v1.4"/><path d="M281.50 0v10"/><path d="M285.50 8.6v1.4"/><path d="M288.50 7.2v2.8"/><path d="M292.50 8.6v1.4"/><path d="M296.50 7.2v2.8"/><path d="M300.50 8.6v1.4"/><path d="M304.50 5.8v4.2"/><path d="M308.50 8.6v1.4"/><path d="M311.50 7.2v2.8"/><path d="M315.50 8.6v1.4"/><path d="M319.50 7.2v2.8"/><path d="M323.50 8.6v1.4"/><path d="M327.50 0v10"/><path d="M331.50 8.6v1.4"/><path d="M334.50 7.2v2.8"/><path d="M338.50 8.6v1.4"/><path d="M342.50 7.2v2.8"/><path d="M346.50 8.6v1.4"/><path d="M350.50 5.8v4.2"/><path d="M354.50 8.6v1.4"/><path d="M358.50 7.2v2.8"/><path d="M361.50 8.6v1.4"/><path d="M365.50 7.2v2.8"/><path d="M369.50 8.6v1.4"/><path d="M373.50 0v10"/><path d="M377.50 8.6v1.4"/><path d="M381.50 7.2v2.8"/><path d="M384.50 8.6v1.4"/><path d="M388.50 7.2v2.8"/><path d="M392.50 8.6v1.4"/><path d="M396.50 5.8v4.2"/><path d="M400.50 8.6v1.4"/><path d="M404.50 7.2v2.8"/><path d="M407.50 8.6v1.4"/><path d="M411.50 7.2v2.8"/><path d="M415.50 8.6v1.4"/><path d="M419.50 0v10"/><path d="M423.50 8.6v1.4"/><path d="M427.50 7.2v2.8"/><path d="M430.50 8.6v1.4"/><path d="M434.50 7.2v2.8"/><path d="M438.50 8.6v1.4"/><path d="M442.50 5.8v4.2"/><path d="M446.50 8.6v1.4"/><path d="M450.50 7.2v2.8"/><path d="M454.50 8.6v1.4"/><path d="M457.50 7.2v2.8"/><path d="M461.50 8.6v1.4"/><path d="M465.50 0v10"/><path d="M469.50 8.6v1.4"/><path d="M473.50 7.2v2.8"/><path d="M477.50 8.6v1.4"/><path d="M480.50 7.2v2.8"/><path d="M484.50 8.6v1.4"/><path d="M488.50 5.8v4.2"/><path d="M492.50 8.6v1.4"/><path d="M496.50 7.2v2.8"/><path d="M500.50 8.6v1.4"/><path d="M503.50 7.2v2.8"/><path d="M507.50 8.6v1.4"/><path d="M511.50 0v10"/><path d="M515.50 8.6v1.4"/><path d="M519.50 7.2v2.8"/><path d="M523.50 8.6v1.4"/><path d="M526.50 7.2v2.8"/><path d="M530.50 8.6v1.4"/><path d="M534.50 5.8v4.2"/><path d="M538.50 8.6v1.4"/><path d="M542.50 7.2v2.8"/><path d="M546.50 8.6v1.4"/><path d="M550.50 7.2v2.8"/><path d="M553.50 8.6v1.4"/><path d="M557.50 0v10"/><path d="M561.50 8.6v1.4"/><path d="M565.50 7.2v2.8"/><path d="M569.50 8.6v1.4"/><path d="M573.50 7.2v2.8"/><path d="M576.50 8.6v1.4"/><path d="M580.50 5.8v4.2"/><path d="M584.50 8.6v1.4"/><path d="M588.50 7.2v2.8"/><path d="M592.50 8.6v1.4"/><path d="M596.50 7.2v2.8"/><path d="M599.50 8.6v1.4"/><path d="M603.50 0v10"/><path d="M607.50 8.6v1.4"/><path d="M611.50 7.2v2.8"/><path d="M615.50 8.6v1.4"/><path d="M619.50 7.2v2.8"/><path d="M622.50 8.6v1.4"/><path d="M626.50 5.8v4.2"/><path d="M630.50 8.6v1.4"/><path d="M634.50 7.2v2.8"/><path d="M638.50 8.6v1.4"/><path d="M642.50 7.2v2.8"/><path d="M645.50 8.6v1.4"/><path d="M649.50 0v10"/><path d="M653.50 8.6v1.4"/><path d="M657.50 7.2v2.8"/><path d="M661.50 8.6v1.4"/><path d="M665.50 7.2v2.8"/><path d="M669.50 8.6v1.4"/><path d="M672.50 5.8v4.2"/><path d="M676.50 8.6v1.4"/><path d="M680.50 7.2v2.8"/><path d="M684.50 8.6v1.4"/><path d="M688.50 7.2v2.8"/><path d="M692.50 8.6v1.4"/><path d="M695.50 0v10"/><path d="M699.50 8.6v1.4"/><path d="M703.50 7.2v2.8"/><path d="M707.50 8.6v1.4"/><path d="M711.50 7.2v2.8"/><path d="M715.50 8.6v1.4"/><path d="M718.50 5.8v4.2"/><path d="M722.50 8.6v1.4"/><path d="M726.50 7.2v2.8"/><path d="M730.50 8.6v1.4"/><path d="M734.50 7.2v2.8"/><path d="M738.50 8.6v1.4"/><path d="M741.50 0v10"/><path d="M745.50 8.6v1.4"/><path d="M749.50 7.2v2.8"/><path d="M753.50 8.6v1.4"/><path d="M757.50 7.2v2.8"/><path d="M761.50 8.6v1.4"/><path d="M765.50 5.8v4.2"/><path d="M768.50 8.6v1.4"/><path d="M772.50 7.2v2.8"/><path d="M776.50 8.6v1.4"/><path d="M780.50 7.2v2.8"/><path d="M784.50 8.6v1.4"/><path d="M788.50 0v10"/><path d="M791.50 8.6v1.4"/><path d="M795.50 7.2v2.8"/><path d="M799.50 8.6v1.4"/><path d="M803.50 7.2v2.8"/><path d="M807.50 8.6v1.4"/><path d="M811.50 5.8v4.2"/><path d="M814.50 8.6v1.4"/><path d="M818.50 7.2v2.8"/><path d="M822.50 8.6v1.4"/><path d="M826.50 7.2v2.8"/><path d="M830.50 8.6v1.4"/><path d="M834.50 0v10"/><path d="M837.50 8.6v1.4"/><path d="M841.50 7.2v2.8"/><path d="M845.50 8.6v1.4"/><path d="M849.50 7.2v2.8"/><path d="M853.50 8.6v1.4"/><path d="M857.50 5.8v4.2"/><path d="M861.50 8.6v1.4"/><path d="M864.50 7.2v2.8"/></g></svg>
<div class="t" style="left:51.90px;top:90.8px;font-size:6.4px;color:#d6d6d6">0</div><div class="t" style="left:97.90px;top:90.8px;font-size:6.4px;color:#d6d6d6">6</div><div class="t" style="left:143.90px;top:90.8px;font-size:6.4px;color:#d6d6d6">12</div><div class="t" style="left:190.90px;top:90.8px;font-size:6.4px;color:#d6d6d6">18</div><div class="t" style="left:236.90px;top:90.8px;font-size:6.4px;color:#d6d6d6">24</div><div class="t" style="left:282.90px;top:90.8px;font-size:6.4px;color:#d6d6d6">30</div><div class="t" style="left:328.90px;top:90.8px;font-size:6.4px;color:#d6d6d6">36</div><div class="t" style="left:374.90px;top:90.8px;font-size:6.4px;color:#d6d6d6">42</div><div class="t" style="left:420.90px;top:90.8px;font-size:6.4px;color:#d6d6d6">48</div><div class="t" style="left:466.90px;top:90.8px;font-size:6.4px;color:#d6d6d6">54</div><div class="t" style="left:512.90px;top:90.8px;font-size:6.4px;color:#d6d6d6">60</div><div class="t" style="left:558.90px;top:90.8px;font-size:6.4px;color:#d6d6d6">66</div><div class="t" style="left:604.90px;top:90.8px;font-size:6.4px;color:#d6d6d6">72</div><div class="t" style="left:650.90px;top:90.8px;font-size:6.4px;color:#d6d6d6">78</div><div class="t" style="left:696.90px;top:90.8px;font-size:6.4px;color:#d6d6d6">84</div><div class="t" style="left:742.90px;top:90.8px;font-size:6.4px;color:#d6d6d6">90</div><div class="t" style="left:789.90px;top:90.8px;font-size:6.4px;color:#d6d6d6">96</div><div class="t" style="left:835.90px;top:90.8px;font-size:6.4px;color:#d6d6d6">102</div>
<svg style="left:0px;top:99px;" width="10" height="527" viewBox="0 0 10 527"><g stroke="#6a6a6a" stroke-width="1" transform="translate(0,-99)"><path d="M6.6 100.50h2.9"/><path d="M0 108.50h9.5"/><path d="M6.6 116.50h2.9"/><path d="M6.6 123.50h2.9"/><path d="M4.8 131.50h4.7"/><path d="M6.6 139.50h2.9"/><path d="M6.6 147.50h2.9"/><path d="M0 154.50h9.5"/><path d="M6.6 162.50h2.9"/><path d="M6.6 170.50h2.9"/><path d="M4.8 177.50h4.7"/><path d="M6.6 185.50h2.9"/><path d="M6.6 193.50h2.9"/><path d="M0 200.50h9.5"/><path d="M6.6 208.50h2.9"/><path d="M6.6 216.50h2.9"/><path d="M4.8 223.50h4.7"/><path d="M6.6 231.50h2.9"/><path d="M6.6 239.50h2.9"/><path d="M0 247.50h9.5"/><path d="M6.6 254.50h2.9"/><path d="M6.6 262.50h2.9"/><path d="M4.8 270.50h4.7"/><path d="M6.6 277.50h2.9"/><path d="M6.6 285.50h2.9"/><path d="M0 293.50h9.5"/><path d="M6.6 300.50h2.9"/><path d="M6.6 308.50h2.9"/><path d="M4.8 316.50h4.7"/><path d="M6.6 323.50h2.9"/><path d="M6.6 331.50h2.9"/><path d="M0 339.50h9.5"/><path d="M6.6 346.50h2.9"/><path d="M6.6 354.50h2.9"/><path d="M4.8 362.50h4.7"/><path d="M6.6 370.50h2.9"/><path d="M6.6 377.50h2.9"/><path d="M0 385.50h9.5"/><path d="M6.6 393.50h2.9"/><path d="M6.6 400.50h2.9"/><path d="M4.8 408.50h4.7"/><path d="M6.6 416.50h2.9"/><path d="M6.6 423.50h2.9"/><path d="M0 431.50h9.5"/><path d="M6.6 439.50h2.9"/><path d="M6.6 446.50h2.9"/><path d="M4.8 454.50h4.7"/><path d="M6.6 462.50h2.9"/><path d="M6.6 470.50h2.9"/><path d="M0 477.50h9.5"/><path d="M6.6 485.50h2.9"/><path d="M6.6 493.50h2.9"/><path d="M4.8 500.50h4.7"/><path d="M6.6 508.50h2.9"/><path d="M6.6 516.50h2.9"/><path d="M0 523.50h9.5"/><path d="M6.6 531.50h2.9"/><path d="M6.6 539.50h2.9"/><path d="M4.8 546.50h4.7"/><path d="M6.6 554.50h2.9"/><path d="M6.6 562.50h2.9"/><path d="M0 570.50h9.5"/><path d="M6.6 577.50h2.9"/><path d="M6.6 585.50h2.9"/><path d="M4.8 593.50h4.7"/><path d="M6.6 600.50h2.9"/><path d="M6.6 608.50h2.9"/><path d="M0 616.50h9.5"/><path d="M6.6 623.50h2.9"/></g></svg>
<div class="t" style="left:1.6px;top:110.70px;font-size:6.4px;color:#d6d6d6">0</div><div class="t" style="left:1.6px;top:156.70px;font-size:6.4px;color:#d6d6d6">6</div><div class="t" style="left:1.6px;top:202.70px;font-size:6.4px;color:#d6d6d6">1</div><div class="t" style="left:1.6px;top:208.30px;font-size:6.4px;color:#d6d6d6">2</div><div class="t" style="left:1.6px;top:249.70px;font-size:6.4px;color:#d6d6d6">1</div><div class="t" style="left:1.6px;top:255.30px;font-size:6.4px;color:#d6d6d6">8</div><div class="t" style="left:1.6px;top:295.70px;font-size:6.4px;color:#d6d6d6">2</div><div class="t" style="left:1.6px;top:301.30px;font-size:6.4px;color:#d6d6d6">4</div><div class="t" style="left:1.6px;top:341.70px;font-size:6.4px;color:#d6d6d6">3</div><div class="t" style="left:1.6px;top:347.30px;font-size:6.4px;color:#d6d6d6">0</div><div class="t" style="left:1.6px;top:387.70px;font-size:6.4px;color:#d6d6d6">3</div><div class="t" style="left:1.6px;top:393.30px;font-size:6.4px;color:#d6d6d6">6</div><div class="t" style="left:1.6px;top:433.70px;font-size:6.4px;color:#d6d6d6">4</div><div class="t" style="left:1.6px;top:439.30px;font-size:6.4px;color:#d6d6d6">2</div><div class="t" style="left:1.6px;top:479.70px;font-size:6.4px;color:#d6d6d6">4</div><div class="t" style="left:1.6px;top:485.30px;font-size:6.4px;color:#d6d6d6">8</div><div class="t" style="left:1.6px;top:525.70px;font-size:6.4px;color:#d6d6d6">5</div><div class="t" style="left:1.6px;top:531.30px;font-size:6.4px;color:#d6d6d6">4</div><div class="t" style="left:1.6px;top:572.70px;font-size:6.4px;color:#d6d6d6">6</div><div class="t" style="left:1.6px;top:578.30px;font-size:6.4px;color:#d6d6d6">0</div><div class="t" style="left:1.6px;top:618.70px;font-size:6.4px;color:#d6d6d6">6</div><div class="t" style="left:1.6px;top:624.30px;font-size:6.4px;color:#d6d6d6">6</div>
<div class="a" style="left:9.5px;top:99px;width:856.5px;height:527px;background:#bcbcbc"></div>
<div class="a" style="left:50.3px;top:108.6px;width:782.5px;height:506.4px;background:#fff;box-shadow:1px 1px 0 #9a9a9a"></div>
<div class="a" style="left:441.9px;top:108.6px;width:0.9px;height:506.4px;background:#c8c8c8"></div>
<svg style="left:0;top:0" width="1024" height="640"><g fill="#15788b"><rect x="136.80" y="146.40" width="2.60" height="15.70"/><rect x="136.80" y="146.40" width="8.30" height="2.60"/><rect x="136.80" y="153.25" width="7.70" height="2.60"/><rect x="136.80" y="159.50" width="8.30" height="2.60"/><rect x="157.80" y="146.40" width="2.70" height="15.70"/><path d="M172.40,149.00 C171.70,147.30 170.02,147.70 168.80,147.70 C164.90,147.70 165.00,150.80 165.20,151.11 C165.00,153.47 172.60,154.25 172.60,157.70 C172.60,160.60 171.04,160.80 168.60,160.80 C165.90,160.80 165.00,159.60 164.60,158.90" fill="none" stroke="#15788b" stroke-width="2.6"/><rect x="186.20" y="146.40" width="2.60" height="15.70"/><rect x="186.20" y="146.40" width="8.10" height="2.60"/><rect x="186.20" y="153.25" width="7.30" height="2.60"/><ellipse cx="204.20" cy="154.25" rx="6.50" ry="6.55" fill="none" stroke="#15788b" stroke-width="2.6"/><rect x="214.70" y="146.40" width="2.60" height="15.70"/><path d="M216.00,147.70 H219.06 C223.30,147.70 223.30,155.19 219.06,155.19 H216.00" fill="none" stroke="#15788b" stroke-width="2.6"/><path d="M218.77,155.19 L223.10,162.30" fill="none" stroke="#15788b" stroke-width="2.6"/><rect x="236.90" y="146.40" width="2.60" height="15.70"/><rect x="236.90" y="146.40" width="8.30" height="2.60"/><rect x="236.90" y="153.25" width="7.70" height="2.60"/><rect x="236.90" y="159.50" width="8.30" height="2.60"/><path d="M247.20,146.40 L250.32,146.40 L254.05,158.20 L257.78,146.40 L260.90,146.40 L255.66,162.10 L252.44,162.10Z"/><rect x="263.10" y="146.40" width="2.60" height="15.70"/><rect x="263.10" y="146.40" width="8.30" height="2.60"/><rect x="263.10" y="153.25" width="7.70" height="2.60"/><rect x="263.10" y="159.50" width="8.30" height="2.60"/><rect x="274.20" y="146.40" width="2.60" height="15.70"/><path d="M275.50,147.70 H278.70 C283.10,147.70 283.10,155.19 278.70,155.19 H275.50" fill="none" stroke="#15788b" stroke-width="2.6"/><path d="M278.40,155.19 L282.90,162.30" fill="none" stroke="#15788b" stroke-width="2.6"/><path d="M286.20,146.40 L289.32,146.40 L292.15,151.91 L294.98,146.40 L298.10,146.40 L293.45,154.85 L290.85,154.85Z"/><rect x="290.85" y="154.25" width="2.60" height="7.85"/><rect x="300.80" y="146.40" width="2.60" height="15.70"/><path d="M302.10,147.70 H305.21 C309.00,147.70 309.00,153.62 305.21,153.62 H302.10" fill="none" stroke="#15788b" stroke-width="2.6"/><path d="M302.10,153.62 H305.70 C309.30,153.62 309.30,160.80 305.70,160.80 H302.10" fill="none" stroke="#15788b" stroke-width="2.6"/><ellipse cx="320.00" cy="154.25" rx="6.50" ry="6.55" fill="none" stroke="#15788b" stroke-width="2.6"/><rect x="331.00" y="146.40" width="2.60" height="15.70"/><path d="M332.30,147.70 H335.45 C341.70,147.70 341.70,160.80 335.45,160.80 H332.30" fill="none" stroke="#15788b" stroke-width="2.6"/><path d="M344.20,146.40 L347.32,146.40 L350.05,151.91 L352.78,146.40 L355.90,146.40 L351.35,154.85 L348.75,154.85Z"/><rect x="348.75" y="154.25" width="2.60" height="7.85"/></g><g fill="#15788b"><rect x="528.80" y="146.40" width="2.60" height="15.70"/><rect x="528.80" y="146.40" width="8.30" height="2.60"/><rect x="528.80" y="153.25" width="7.70" height="2.60"/><rect x="528.80" y="159.50" width="8.30" height="2.60"/><rect x="549.80" y="146.40" width="2.70" height="15.70"/><path d="M564.40,149.00 C563.70,147.30 562.02,147.70 560.80,147.70 C556.90,147.70 557.00,150.80 557.20,151.11 C557.00,153.47 564.60,154.25 564.60,157.70 C564.60,160.60 563.04,160.80 560.60,160.80 C557.90,160.80 557.00,159.60 556.60,158.90" fill="none" stroke="#15788b" stroke-width="2.6"/><rect x="578.20" y="146.40" width="2.60" height="15.70"/><rect x="578.20" y="146.40" width="8.10" height="2.60"/><rect x="578.20" y="153.25" width="7.30" height="2.60"/><ellipse cx="596.20" cy="154.25" rx="6.50" ry="6.55" fill="none" stroke="#15788b" stroke-width="2.6"/><rect x="606.70" y="146.40" width="2.60" height="15.70"/><path d="M608.00,147.70 H611.07 C615.30,147.70 615.30,155.19 611.07,155.19 H608.00" fill="none" stroke="#15788b" stroke-width="2.6"/><path d="M610.77,155.19 L615.10,162.30" fill="none" stroke="#15788b" stroke-width="2.6"/><rect x="628.90" y="146.40" width="2.60" height="15.70"/><rect x="628.90" y="146.40" width="8.30" height="2.60"/><rect x="628.90" y="153.25" width="7.70" height="2.60"/><rect x="628.90" y="159.50" width="8.30" height="2.60"/><path d="M639.20,146.40 L642.32,146.40 L646.05,158.20 L649.78,146.40 L652.90,146.40 L647.66,162.10 L644.44,162.10Z"/><rect x="655.10" y="146.40" width="2.60" height="15.70"/><rect x="655.10" y="146.40" width="8.30" height="2.60"/><rect x="655.10" y="153.25" width="7.70" height="2.60"/><rect x="655.10" y="159.50" width="8.30" height="2.60"/><rect x="666.20" y="146.40" width="2.60" height="15.70"/><path d="M667.50,147.70 H670.70 C675.10,147.70 675.10,155.19 670.70,155.19 H667.50" fill="none" stroke="#15788b" stroke-width="2.6"/><path d="M670.40,155.19 L674.90,162.30" fill="none" stroke="#15788b" stroke-width="2.6"/><path d="M678.20,146.40 L681.32,146.40 L684.15,151.91 L686.98,146.40 L690.10,146.40 L685.45,154.85 L682.85,154.85Z"/><rect x="682.85" y="154.25" width="2.60" height="7.85"/><rect x="692.80" y="146.40" width="2.60" height="15.70"/><path d="M694.10,147.70 H697.21 C701.00,147.70 701.00,153.62 697.21,153.62 H694.10" fill="none" stroke="#15788b" stroke-width="2.6"/><path d="M694.10,153.62 H697.70 C701.30,153.62 701.30,160.80 697.70,160.80 H694.10" fill="none" stroke="#15788b" stroke-width="2.6"/><ellipse cx="712.00" cy="154.25" rx="6.50" ry="6.55" fill="none" stroke="#15788b" stroke-width="2.6"/><rect x="723.00" y="146.40" width="2.60" height="15.70"/><path d="M724.30,147.70 H727.45 C733.70,147.70 733.70,160.80 727.45,160.80 H724.30" fill="none" stroke="#15788b" stroke-width="2.6"/><path d="M736.20,146.40 L739.32,146.40 L742.05,151.91 L744.78,146.40 L747.90,146.40 L743.35,154.85 L740.75,154.85Z"/><rect x="740.75" y="154.25" width="2.60" height="7.85"/></g></svg>
<div class="t" style="left:145.2px;top:175.2px;font-size:9.6px;color:#aed2a0;font-weight:normal;transform-origin:0 0;transform:scaleX(0.7763);letter-spacing:3.0px;-webkit-text-stroke:0.25px #aed2a0;">EVERYBODY EVERYWHERE BELONGS</div>
<div class="t" style="left:502.5px;top:175.2px;font-size:9.6px;color:#aed2a0;font-weight:normal;transform-origin:0 0;transform:scaleX(0.7902);letter-spacing:3.0px;-webkit-text-stroke:0.25px #aed2a0;">DRAW A PICTURE AND PRACTICE THE LETTER E</div>
<svg style="left:0;top:0" width="1024" height="640" viewBox="0 0 1024 640"><defs><clipPath id="eclip"><path d="M134,212.5 L367.5,212.5 L367.5,280 L204,280 L204,334.5 L290,334.5 L290,400 L204,400 L204,469 L367,469 L367,538.5 L134,538.5 Z"/></clipPath><pattern id="h0" patternUnits="userSpaceOnUse" width="5.0" height="5.0" patternTransform="rotate(45)"><rect x="0" y="0" width="1.4" height="5.0" fill="#111"/></pattern><pattern id="h1" patternUnits="userSpaceOnUse" width="5.0" height="5.0" patternTransform="rotate(-40)"><rect x="0" y="0" width="1.4" height="5.0" fill="#111"/></pattern><pattern id="h2" patternUnits="userSpaceOnUse" width="5.0" height="5.0" patternTransform="rotate(28)"><rect x="0" y="0" width="1.4" height="5.0" fill="#111"/></pattern><pattern id="h3" patternUnits="userSpaceOnUse" width="5.0" height="5.0" patternTransform="rotate(-35)"><rect x="0" y="0" width="1.4" height="5.0" fill="#111"/></pattern><pattern id="h4" patternUnits="userSpaceOnUse" width="5.0" height="5.0" patternTransform="rotate(52)"><rect x="0" y="0" width="1.4" height="5.0" fill="#111"/></pattern><pattern id="h5" patternUnits="userSpaceOnUse" width="3.4" height="3.4" patternTransform="rotate(-22)"><rect x="0" y="0" width="1.4" height="3.4" fill="#111"/></pattern><pattern id="h6" patternUnits="userSpaceOnUse" width="3.2" height="3.2" patternTransform="rotate(80)"><rect x="0" y="0" width="1.4" height="3.2" fill="#111"/></pattern><pattern id="h7" patternUnits="userSpaceOnUse" width="3.2" height="3.2" patternTransform="rotate(-30)"><rect x="0" y="0" width="1.4" height="3.2" fill="#111"/></pattern><pattern id="h8" patternUnits="userSpaceOnUse" width="3.2" height="3.2" patternTransform="rotate(-60)"><rect x="0" y="0" width="1.2" height="3.2" fill="#111"/></pattern><pattern id="h9" patternUnits="userSpaceOnUse" width="6.2" height="6.2" patternTransform="rotate(30)"><rect x="0" y="0" width="1.4" height="6.2" fill="#111"/></pattern><pattern id="h10" patternUnits="userSpaceOnUse" width="6.2" height="6.2" patternTransform="rotate(30)"><rect x="0" y="0" width="1.4" height="6.2" fill="#111"/></pattern><pattern id="h11" patternUnits="userSpaceOnUse" width="5" height="5" patternTransform="rotate(30)"><rect x="0" y="0" width="1.2" height="5" fill="#111"/></pattern></defs><g clip-path="url(#eclip)" stroke-linecap="round"><path d="M134,212 L158,212 L134,236Z" fill="url(#h0)" stroke="#111" stroke-width="1.5"/><path d="M158,212 L192,212 L172,234 L148,240 L134,252 L134,236Z" fill="url(#h1)" stroke="#111" stroke-width="1.5"/><path d="M192,212 L224,212 L212,232 L172,234Z" fill="url(#h2)" stroke="#111" stroke-width="1.5"/><path d="M224,212 L258,212 L244,226 L212,232Z" fill="url(#h3)" stroke="#111" stroke-width="1.5"/><path d="M258,212 L282,212 L276,224 L266,238 L244,226Z" fill="url(#h4)" stroke="#111" stroke-width="1.5"/><path d="M212,232 L244,226 L266,238 L260,250 L236,240Z" fill="url(#h5)" stroke="#111" stroke-width="1.5"/><path d="M266,238 L276,224 L282,240 L288,262 L296,280 L276,280 L268,262Z" fill="url(#h6)" stroke="#111" stroke-width="1.5"/><path d="M262,252 L276,266 L282,280 L270,280Z" fill="url(#h7)" stroke="#111" stroke-width="1.5"/><path d="M136,262 C150,246 170,236 196,232 C226,229 254,242 272,260 C280,268 284,274 288,280" stroke="#111" stroke-width="2.6" fill="none"/><path d="M150,256 C166,244 186,240 206,240 C232,241 254,254 266,270 L274,280" stroke="#111" stroke-width="2.0" fill="none"/><circle cx="200.0" cy="241.0" r="0.9" fill="#111"/><circle cx="206.7" cy="241.6" r="0.9" fill="#111"/><circle cx="213.3" cy="242.8" r="0.9" fill="#111"/><circle cx="220.0" cy="244.4" r="0.9" fill="#111"/><circle cx="226.7" cy="246.7" r="0.9" fill="#111"/><circle cx="233.3" cy="249.5" r="0.9" fill="#111"/><circle cx="240.0" cy="252.8" r="0.9" fill="#111"/><circle cx="246.7" cy="256.6" r="0.9" fill="#111"/><circle cx="253.3" cy="261.0" r="0.9" fill="#111"/><circle cx="260.0" cy="266.0" r="0.9" fill="#111"/><path d="M222,239 l2,6 M240,244 l-2,6 M256,253 l-3,5" stroke="#111" stroke-width="2.6" fill="none"/><path d="M203,263.6 A9,9 0 0 1 221,263.6" stroke="#111" stroke-width="1.5" fill="none"/><path d="M222,267.2 A8,8 0 0 1 238,267.2" stroke="#111" stroke-width="1.5" fill="none"/><path d="M240,272.8 A7,7 0 0 1 254,272.8" stroke="#111" stroke-width="1.5" fill="none"/><path d="M256,278.0 A5,5 0 0 1 266,278.0" stroke="#111" stroke-width="1.5" fill="none"/><path d="M200,277.4 A6,6 0 0 1 212,277.4" stroke="#111" stroke-width="1.5" fill="none"/><path d="M216,280.4 A6,6 0 0 1 228,280.4" stroke="#111" stroke-width="1.5" fill="none"/><path d="M233,283.0 A5,5 0 0 1 243,283.0" stroke="#111" stroke-width="1.5" fill="none"/><path d="M203,250 C214,256 226,258 242,256" stroke="#111" stroke-width="1.3" fill="none"/><path d="M198,258 C206,266 210,272 212,280" stroke="#111" stroke-width="1.3" fill="none"/><path d="M186,250 C194,258 198,268 200,280" stroke="#111" stroke-width="1.3" fill="none"/><path d="M296,268 C332,264 348,236 334,213" stroke="#111" stroke-width="2.4" fill="none"/><path d="M306,271 C344,268 360,240 348,213" stroke="#111" stroke-width="2.0" fill="none"/><path d="M318,274 C354,272 368,246 362,214" stroke="#111" stroke-width="1.7" fill="none"/><path d="M322,213 C336,226 338,246 326,262" stroke="#111" stroke-width="1.6" fill="none"/><path d="M352,214 C362,222 364,232 356,240 C367,246 367,258 358,264 C366,268 367,276 362,280" fill="none" stroke="#111" stroke-width="1.8"/><path d="M296,280 C300,270 314,268 320,276 C328,268 342,270 346,280" fill="none" stroke="#111" stroke-width="1.8"/><path d="M276,234 C272,216 294,208 312,216 C328,224 330,250 320,262 C308,274 282,270 277,252 C276,246 276,240 276,234Z" fill="#fff" stroke="#111" stroke-width="3"/><path d="M282,236 C281,224 296,217 309,222 C320,228 322,248 315,257 C306,266 288,263 283,250Z" fill="#222"/><circle cx="286.0" cy="232.0" r="6.6" stroke="#111" stroke-width="2.2" fill="#fff"/><circle cx="298.0" cy="223.8" r="5.8" stroke="#111" stroke-width="2.2" fill="#fff"/><circle cx="309.0" cy="234.0" r="6.2" stroke="#111" stroke-width="2.2" fill="#fff"/><circle cx="297.5" cy="245.5" r="6.8" stroke="#111" stroke-width="2.2" fill="#fff"/><circle cx="286.5" cy="252.0" r="5.0" stroke="#111" stroke-width="2.2" fill="#fff"/><circle cx="306.0" cy="256.0" r="5.2" stroke="#111" stroke-width="2.2" fill="#fff"/><circle cx="315.5" cy="247.0" r="4.2" stroke="#111" stroke-width="2.2" fill="#fff"/><circle cx="293.0" cy="261.0" r="3.4" stroke="#111" stroke-width="2.2" fill="#fff"/><circle cx="315.0" cy="258.0" r="2.8" stroke="#111" stroke-width="2.2" fill="#fff"/><circle cx="286.0" cy="232.0" r="3.0" stroke="#111" stroke-width="1.4" fill="none"/><path d="M134,250 C140,243 148,243 153,248 C158,253 164,252 168.0,245 C170.0,243 172.0,241 173.0,239" stroke="#111" stroke-width="2.2" fill="none"/><path d="M134,263 C140,256 148,256 153,261 C158,266 164,265 170.5,258 C172.5,256 174.5,254 175.5,252" stroke="#111" stroke-width="2.2" fill="none"/><path d="M134,276 C140,269 148,269 153,274 C158,279 164,278 173.0,271 C175.0,269 177.0,267 178.0,265" stroke="#111" stroke-width="2.2" fill="none"/><path d="M134,289 C140,282 148,282 153,287 C158,292 164,291 175.5,284 C177.5,282 179.5,280 180.5,278" stroke="#111" stroke-width="2.2" fill="none"/><path d="M134,302 C140,295 148,295 153,300 C158,305 164,304 178.0,297 C180.0,295 182.0,293 183.0,291" stroke="#111" stroke-width="2.2" fill="none"/><path d="M134,315 C140,308 148,308 153,313 C158,318 164,317 180.5,310 C182.5,308 184.5,306 185.5,304" stroke="#111" stroke-width="2.2" fill="none"/><path d="M164,232 C168,258 176,282 187,306 L206,298 C196,276 188,256 182,230Z" fill="#fff"/><path d="M164,232 C168,258 176,282 187,306" stroke="#111" stroke-width="2.2" fill="none"/><path d="M182,230 C188,256 196,276 206,298" stroke="#111" stroke-width="2.2" fill="none"/><path d="M164.0,232.0 L182.0,230.0" stroke="#111" stroke-width="1.5" fill="none"/><path d="M165.1,236.0 L183.1,233.7" stroke="#111" stroke-width="1.5" fill="none"/><path d="M166.2,240.0 L184.3,237.3" stroke="#111" stroke-width="1.5" fill="none"/><path d="M167.3,244.0 L185.4,241.0" stroke="#111" stroke-width="1.5" fill="none"/><path d="M168.4,248.0 L186.6,244.7" stroke="#111" stroke-width="1.5" fill="none"/><path d="M169.6,252.0 L187.9,248.3" stroke="#111" stroke-width="1.5" fill="none"/><path d="M170.8,256.0 L189.1,252.0" stroke="#111" stroke-width="1.5" fill="none"/><path d="M172.0,260.0 L190.4,255.7" stroke="#111" stroke-width="1.5" fill="none"/><path d="M173.2,264.0 L191.7,259.3" stroke="#111" stroke-width="1.5" fill="none"/><path d="M174.5,268.0 L193.0,263.0" stroke="#111" stroke-width="1.5" fill="none"/><path d="M175.8,272.0 L194.3,266.7" stroke="#111" stroke-width="1.5" fill="none"/><path d="M177.1,276.0 L195.7,270.3" stroke="#111" stroke-width="1.5" fill="none"/><path d="M178.4,280.0 L197.1,274.0" stroke="#111" stroke-width="1.5" fill="none"/><path d="M179.8,284.0 L198.5,277.7" stroke="#111" stroke-width="1.5" fill="none"/><path d="M181.2,288.0 L200.0,281.3" stroke="#111" stroke-width="1.5" fill="none"/><path d="M182.6,292.0 L201.4,285.0" stroke="#111" stroke-width="1.5" fill="none"/><path d="M184.0,296.0 L202.9,288.7" stroke="#111" stroke-width="1.5" fill="none"/><path d="M185.5,300.0 L204.5,292.3" stroke="#111" stroke-width="1.5" fill="none"/><path d="M187.0,304.0 L206.0,296.0" stroke="#111" stroke-width="1.5" fill="none"/><path d="M136,332 C138,318 150,312 157,318 C162,324 158,336 148,336 C142,336 140,344 146,350" stroke="#111" stroke-width="2.2" fill="none"/><path d="M134,356 C146,352 156,346 162,340" stroke="#111" stroke-width="1.6" fill="none"/><path d="M134,372 C144,368 154,364 164,362" stroke="#111" stroke-width="1.6" fill="none"/><path d="M134,322 C152,340 136,366 150,396" stroke="#111" stroke-width="1.8" fill="none"/><path d="M139,324 C155,340 141,366 155,393" stroke="#111" stroke-width="1.3" fill="none"/><path d="M144,326 C158,340 146,366 160,390" stroke="#111" stroke-width="1.8" fill="none"/><path d="M149,328 C161,340 151,366 165,387" stroke="#111" stroke-width="1.3" fill="none"/><path d="M249.9,331.9 A45,45 0 1 1 208.1,290.1" stroke="#111" stroke-width="15" fill="none"/><ellipse cx="249.9" cy="337.4" rx="6.6" ry="5.4" transform="rotate(93.0 249.9 337.4)" stroke="#111" stroke-width="0.1" fill="#fff"/><ellipse cx="247.7" cy="349.3" rx="6.6" ry="5.4" transform="rotate(108.5 247.7 349.3)" stroke="#111" stroke-width="0.1" fill="#fff"/><ellipse cx="242.3" cy="360.2" rx="6.6" ry="5.4" transform="rotate(124.1 242.3 360.2)" stroke="#111" stroke-width="0.1" fill="#fff"/><ellipse cx="234.2" cy="369.3" rx="6.6" ry="5.4" transform="rotate(139.6 234.2 369.3)" stroke="#111" stroke-width="0.1" fill="#fff"/><ellipse cx="223.9" cy="375.8" rx="6.6" ry="5.4" transform="rotate(155.1 223.9 375.8)" stroke="#111" stroke-width="0.1" fill="#fff"/><ellipse cx="212.3" cy="379.4" rx="6.6" ry="5.4" transform="rotate(170.6 212.3 379.4)" stroke="#111" stroke-width="0.1" fill="#fff"/><ellipse cx="200.2" cy="379.7" rx="6.6" ry="5.4" transform="rotate(186.2 200.2 379.7)" stroke="#111" stroke-width="0.1" fill="#fff"/><ellipse cx="188.4" cy="376.8" rx="6.6" ry="5.4" transform="rotate(201.7 188.4 376.8)" stroke="#111" stroke-width="0.1" fill="#fff"/><ellipse cx="177.8" cy="370.8" rx="6.6" ry="5.4" transform="rotate(217.2 177.8 370.8)" stroke="#111" stroke-width="0.1" fill="#fff"/><ellipse cx="169.2" cy="362.2" rx="6.6" ry="5.4" transform="rotate(232.8 169.2 362.2)" stroke="#111" stroke-width="0.1" fill="#fff"/><ellipse cx="163.2" cy="351.6" rx="6.6" ry="5.4" transform="rotate(248.3 163.2 351.6)" stroke="#111" stroke-width="0.1" fill="#fff"/><ellipse cx="160.3" cy="339.8" rx="6.6" ry="5.4" transform="rotate(263.8 160.3 339.8)" stroke="#111" stroke-width="0.1" fill="#fff"/><ellipse cx="160.6" cy="327.7" rx="6.6" ry="5.4" transform="rotate(279.4 160.6 327.7)" stroke="#111" stroke-width="0.1" fill="#fff"/><ellipse cx="164.2" cy="316.1" rx="6.6" ry="5.4" transform="rotate(294.9 164.2 316.1)" stroke="#111" stroke-width="0.1" fill="#fff"/><ellipse cx="170.7" cy="305.8" rx="6.6" ry="5.4" transform="rotate(310.4 170.7 305.8)" stroke="#111" stroke-width="0.1" fill="#fff"/><ellipse cx="179.8" cy="297.7" rx="6.6" ry="5.4" transform="rotate(325.9 179.8 297.7)" stroke="#111" stroke-width="0.1" fill="#fff"/><ellipse cx="190.7" cy="292.3" rx="6.6" ry="5.4" transform="rotate(341.5 190.7 292.3)" stroke="#111" stroke-width="0.1" fill="#fff"/><ellipse cx="202.6" cy="290.1" rx="6.6" ry="5.4" transform="rotate(357.0 202.6 290.1)" stroke="#111" stroke-width="0.1" fill="#fff"/><path d="M233.4,333.0 A28.5,28.5 0 1 1 207.0,306.6" stroke="#fff" stroke-width="17" fill="none"/><path d="M225.0,335.7 L242.0,336.3" stroke="#111" stroke-width="2.2" fill="none"/><path d="M224.5,339.4 L241.1,343.1" stroke="#111" stroke-width="2.2" fill="none"/><path d="M223.4,342.9 L239.0,349.6" stroke="#111" stroke-width="2.2" fill="none"/><path d="M221.6,346.2 L235.7,355.6" stroke="#111" stroke-width="2.2" fill="none"/><path d="M219.3,349.0 L231.4,361.0" stroke="#111" stroke-width="2.2" fill="none"/><path d="M216.4,351.4 L226.1,365.4" stroke="#111" stroke-width="2.2" fill="none"/><path d="M213.2,353.2 L220.1,368.8" stroke="#111" stroke-width="2.2" fill="none"/><path d="M209.7,354.4 L213.7,371.0" stroke="#111" stroke-width="2.2" fill="none"/><path d="M206.0,355.0 L206.9,372.0" stroke="#111" stroke-width="2.2" fill="none"/><path d="M202.3,354.8 L200.0,371.7" stroke="#111" stroke-width="2.2" fill="none"/><path d="M198.7,354.0 L193.3,370.1" stroke="#111" stroke-width="2.2" fill="none"/><path d="M195.3,352.5 L187.0,367.3" stroke="#111" stroke-width="2.2" fill="none"/><path d="M192.2,350.4 L181.4,363.5" stroke="#111" stroke-width="2.2" fill="none"/><path d="M189.6,347.8 L176.5,358.6" stroke="#111" stroke-width="2.2" fill="none"/><path d="M187.5,344.7 L172.7,353.0" stroke="#111" stroke-width="2.2" fill="none"/><path d="M186.0,341.3 L169.9,346.7" stroke="#111" stroke-width="2.2" fill="none"/><path d="M185.2,337.7 L168.3,340.0" stroke="#111" stroke-width="2.2" fill="none"/><path d="M185.0,334.0 L168.0,333.1" stroke="#111" stroke-width="2.2" fill="none"/><path d="M185.6,330.3 L169.0,326.3" stroke="#111" stroke-width="2.2" fill="none"/><path d="M186.8,326.8 L171.2,319.9" stroke="#111" stroke-width="2.2" fill="none"/><path d="M188.6,323.6 L174.6,313.9" stroke="#111" stroke-width="2.2" fill="none"/><path d="M191.0,320.7 L179.0,308.6" stroke="#111" stroke-width="2.2" fill="none"/><path d="M193.8,318.4 L184.4,304.3" stroke="#111" stroke-width="2.2" fill="none"/><path d="M197.1,316.6 L190.4,301.0" stroke="#111" stroke-width="2.2" fill="none"/><path d="M200.6,315.5 L196.9,298.9" stroke="#111" stroke-width="2.2" fill="none"/><path d="M204.3,315.0 L203.7,298.0" stroke="#111" stroke-width="2.2" fill="none"/><path d="M225.0,335.0 A20,20 0 1 1 205.0,315.0" stroke="#111" stroke-width="3.6" fill="none"/><path d="M242.0,335.0 A37,37 0 1 1 205.0,298.0" stroke="#111" stroke-width="1.8" fill="none"/><path d="M205,335 Q210.4,344.6 204.4,353.0" stroke="#111" stroke-width="1.2" fill="none"/><path d="M205,335 Q200.1,347.0 204.4,353.0" stroke="#111" stroke-width="0.9" fill="none"/><path d="M205,335 Q206.4,345.9 197.7,351.4" stroke="#111" stroke-width="1.2" fill="none"/><path d="M205,335 Q196.0,344.3 197.7,351.4" stroke="#111" stroke-width="0.9" fill="none"/><path d="M205,335 Q202.2,345.7 192.1,347.5" stroke="#111" stroke-width="1.2" fill="none"/><path d="M205,335 Q193.1,340.3 192.1,347.5" stroke="#111" stroke-width="0.9" fill="none"/><path d="M205,335 Q198.5,343.8 188.3,341.7" stroke="#111" stroke-width="1.2" fill="none"/><path d="M205,335 Q192.0,335.4 188.3,341.7" stroke="#111" stroke-width="0.9" fill="none"/><path d="M205,335 Q195.6,340.7 187.0,335.0" stroke="#111" stroke-width="1.2" fill="none"/><path d="M205,335 Q192.8,330.5 187.0,335.0" stroke="#111" stroke-width="0.9" fill="none"/><path d="M205,335 Q194.2,336.8 188.3,328.3" stroke="#111" stroke-width="1.2" fill="none"/><path d="M205,335 Q195.3,326.3 188.3,328.3" stroke="#111" stroke-width="0.9" fill="none"/><path d="M205,335 Q194.3,332.6 192.1,322.5" stroke="#111" stroke-width="1.2" fill="none"/><path d="M205,335 Q199.3,323.3 192.1,322.5" stroke="#111" stroke-width="0.9" fill="none"/><path d="M205,335 Q195.9,328.8 197.7,318.6" stroke="#111" stroke-width="1.2" fill="none"/><path d="M205,335 Q204.1,322.0 197.7,318.6" stroke="#111" stroke-width="0.9" fill="none"/><path d="M205,335 Q215.1,341.5 223.7,338.3" stroke="#111" stroke-width="1.1" fill="none"/><path d="M205,335 Q212.2,344.6 221.5,344.5" stroke="#111" stroke-width="1.1" fill="none"/><path d="M205,335 Q208.5,346.5 217.2,349.6" stroke="#111" stroke-width="1.1" fill="none"/><path d="M205,335 Q204.4,347.0 211.5,352.9" stroke="#111" stroke-width="1.1" fill="none"/><path d="M257.5,342.0 C265.5,332.0 277.0,330.0 285.0,339.0 C288.0,343.0 287.0,349.0 283.0,351.0" stroke="#111" stroke-width="1.8" fill="none"/><path d="M261.5,345.0 C267.5,338.0 275.0,336.0 281.0,343.0" stroke="#111" stroke-width="1.0" fill="none"/><path d="M256.2,351.5 C264.2,341.5 277.0,339.5 285.0,348.5 C288.0,352.5 287.0,358.5 283.0,360.5" stroke="#111" stroke-width="1.8" fill="none"/><path d="M260.2,354.5 C266.2,347.5 275.0,345.5 281.0,352.5" stroke="#111" stroke-width="1.0" fill="none"/><path d="M253.1,361.0 C261.1,351.0 275.1,349.0 283.1,358.0 C286.1,362.0 285.1,368.0 281.1,370.0" stroke="#111" stroke-width="1.8" fill="none"/><path d="M257.1,364.0 C263.1,357.0 273.1,355.0 279.1,362.0" stroke="#111" stroke-width="1.0" fill="none"/><path d="M247.7,370.5 C255.7,360.5 269.7,358.5 277.7,367.5 C280.7,371.5 279.7,377.5 275.7,379.5" stroke="#111" stroke-width="1.8" fill="none"/><path d="M251.7,373.5 C257.7,366.5 267.7,364.5 273.7,371.5" stroke="#111" stroke-width="1.0" fill="none"/><path d="M239.0,380.0 C247.0,370.0 261.0,368.0 269.0,377.0 C272.0,381.0 271.0,387.0 267.0,389.0" stroke="#111" stroke-width="1.8" fill="none"/><path d="M243.0,383.0 C249.0,376.0 259.0,374.0 265.0,381.0" stroke="#111" stroke-width="1.0" fill="none"/><path d="M224.0,389.5 C232.0,379.5 246.0,377.5 254.0,386.5 C257.0,390.5 256.0,396.5 252.0,398.5" stroke="#111" stroke-width="1.8" fill="none"/><path d="M228.0,392.5 C234.0,385.5 244.0,383.5 250.0,390.5" stroke="#111" stroke-width="1.0" fill="none"/><path d="M226.0,399.0 C234.0,389.0 248.0,387.0 256.0,396.0 C259.0,400.0 258.0,406.0 254.0,408.0" stroke="#111" stroke-width="1.8" fill="none"/><path d="M230.0,402.0 C236.0,395.0 246.0,393.0 252.0,400.0" stroke="#111" stroke-width="1.0" fill="none"/><circle cx="258.0" cy="342.0" r="1.3" fill="#111"/><circle cx="284.0" cy="339.0" r="1.3" fill="#111"/><circle cx="283.0" cy="356.0" r="1.3" fill="#111"/><circle cx="262.0" cy="362.0" r="1.3" fill="#111"/><circle cx="276.0" cy="378.0" r="1.3" fill="#111"/><circle cx="282.0" cy="396.0" r="1.3" fill="#111"/><circle cx="246.0" cy="396.0" r="1.3" fill="#111"/><circle cx="230.0" cy="397.0" r="1.3" fill="#111"/><path d="M280,364 C283,380 284,392 284,400 L290,400 L290,360Z" fill="#111"/><path d="M285.5,366 C286.5,378 287,390 287.5,397 L290,397 L290,366Z" fill="#fff"/><path d="M146,400 L166,368 L178,376 L160,404Z" fill="url(#h8)" stroke="#111" stroke-width="1.8"/><path d="M134,388 C156,400 182,412 204,420" stroke="#111" stroke-width="2.2" fill="none"/><path d="M136,396 C158,408 182,420 204,428" stroke="#111" stroke-width="1.4" fill="none"/><path d="M212,400 C216,406 214,412 220,418" stroke="#111" stroke-width="0" fill="none"/><path d="M225,400 C229,406 227,412 233,418" stroke="#111" stroke-width="0" fill="none"/><path d="M238,400 C242,406 240,412 246,418" stroke="#111" stroke-width="0" fill="none"/><path d="M251,400 C255,406 253,412 259,418" stroke="#111" stroke-width="0" fill="none"/><path d="M264,400 C268,406 266,412 272,418" stroke="#111" stroke-width="0" fill="none"/><path d="M134,404 C146,424 150,446 144,470 C140,490 146,515 160,538" stroke="#111" stroke-width="1.6" fill="none"/><path d="M138,402 C150,422 155,446 149,470 C145,490 151,514 165,538" stroke="#111" stroke-width="1.1" fill="none"/><path d="M150,396 C166,416 172,440 166,466 C162,486 168,510 178,538" stroke="#111" stroke-width="1.6" fill="none"/><path d="M155,396 C171,416 177,440 171,466 C167,486 173,510 183,538" stroke="#111" stroke-width="1.1" fill="none"/><path d="M178,408 C188,428 194,446 190,466" stroke="#111" stroke-width="1.5" fill="none"/><path d="M182,406 C192,426 198,446 194,466" stroke="#111" stroke-width="1.0" fill="none"/><path d="M196,420 C202,436 204,452 204,469" stroke="#111" stroke-width="1.4" fill="none"/><path d="M134,470 C136,490 136,510 140,530 L134,534Z" fill="#111"/><path d="M136.0,412.0 Q142.1,408.8 140.6,402.0 Q134.5,405.2 136.0,412.0" stroke="#111" stroke-width="1.3" fill="none"/><path d="M144.0,419.0 Q150.1,415.8 148.6,409.0 Q142.5,412.2 144.0,419.0" stroke="#111" stroke-width="1.3" fill="none"/><path d="M153.0,426.0 Q159.1,422.8 157.6,416.0 Q151.5,419.2 153.0,426.0" stroke="#111" stroke-width="1.3" fill="none"/><path d="M139.0,444.0 Q145.4,446.6 149.6,441.2 Q143.2,438.5 139.0,444.0" stroke="#111" stroke-width="1.3" fill="none"/><path d="M142.0,460.0 Q148.1,463.2 152.8,458.1 Q146.7,454.9 142.0,460.0" stroke="#111" stroke-width="1.3" fill="none"/><path d="M170.0,430.0 Q176.8,431.5 180.0,425.4 Q173.2,423.9 170.0,430.0" stroke="#111" stroke-width="1.3" fill="none"/><path d="M175.0,447.0 Q178.2,453.1 185.0,451.6 Q181.8,445.5 175.0,447.0" stroke="#111" stroke-width="1.3" fill="none"/><path d="M182.0,425.0 Q188.9,424.1 189.8,417.2 Q182.9,418.1 182.0,425.0" stroke="#111" stroke-width="1.3" fill="none"/><path d="M188.0,443.0 Q190.7,449.4 197.5,448.5 Q194.9,442.1 188.0,443.0" stroke="#111" stroke-width="1.3" fill="none"/><path d="M186.0,458.0 Q192.6,460.1 196.3,454.2 Q189.7,452.2 186.0,458.0" stroke="#111" stroke-width="1.3" fill="none"/><path d="M160.0,452.0 Q161.5,458.8 168.4,459.1 Q166.9,452.3 160.0,452.0" stroke="#111" stroke-width="1.3" fill="none"/><path d="M196.0,433.0 Q202.4,430.3 201.5,423.5 Q195.1,426.1 196.0,433.0" stroke="#111" stroke-width="1.3" fill="none"/><path d="M172.0,462.0 Q178.9,462.9 181.5,456.5 Q174.7,455.6 172.0,462.0" stroke="#111" stroke-width="1.3" fill="none"/><path d="M151.0,438.0 Q153.1,444.6 160.0,444.3 Q157.9,437.7 151.0,438.0" stroke="#111" stroke-width="1.3" fill="none"/><path d="M199.0,450.0 Q204.8,446.3 202.8,439.7 Q196.9,443.4 199.0,450.0" stroke="#111" stroke-width="1.3" fill="none"/><path d="M204,469 L262,469 L252,484 L214,490Z" fill="url(#h9)" stroke="#111" stroke-width="1.5"/><path d="M262,469 L300,469 L300,474 L290,480 L272,486 L258,486Z" fill="url(#h10)" stroke="#111" stroke-width="1.5"/><path d="M168,528 L208,536 L210,538 L170,538Z" fill="url(#h11)" stroke="#111" stroke-width="1.5"/><path d="M176,502 C164,494 160,482 168,476 C176,472 186,474 192,470 C204,474 216,480 214,492 C210,500 196,504 176,502Z" stroke="#111" stroke-width="2.0" fill="none"/><path d="M180,498 C172,492 170,484 176,480 C182,478 190,478 194,476 C204,480 210,486 208,494" stroke="#111" stroke-width="1.2" fill="none"/><path d="M186,492 C184,486 190,482 196,486 C200,490 196,494 204,492" stroke="#111" stroke-width="1.3" fill="none"/><path d="M176,502 C166,510 164,522 172,530 C186,538 204,536 222,538 C214,526 206,516 196,508 C188,504 182,502 176,502Z" stroke="#111" stroke-width="2.0" fill="none"/><path d="M178,508 C172,516 174,524 182,528 C194,532 206,532 214,534" stroke="#111" stroke-width="1.2" fill="none"/><path d="M184,514 C190,512 194,518 200,516 C204,514 208,520 212,522" stroke="#111" stroke-width="1.3" fill="none"/><path d="M176,502 C210,492 238,486 258,486" stroke="#111" stroke-width="2.0" fill="none"/><path d="M178,506 C212,498 240,494 256,494" stroke="#111" stroke-width="1.6" fill="none"/><path d="M210,492 C230,488 248,490 262,500 C276,510 286,524 292,538" stroke="#111" stroke-width="2.2" fill="none"/><path d="M214,500 C234,498 250,502 260,512 C270,522 278,530 282,538" stroke="#111" stroke-width="1.6" fill="none"/><path d="M224,506 C232,504 238,510 244,510 C250,510 254,516 258,520" stroke="#111" stroke-width="1.3" fill="none"/><path d="M236,520 C242,518 248,524 254,526" stroke="#111" stroke-width="1.2" fill="none"/><circle cx="276.5" cy="492" r="14.5" fill="#fff" stroke="#111" stroke-width="2.2"/><path d="M268.5,500 A8.5,8.5 0 1 1 283,495" stroke="#111" stroke-width="2.2" fill="none"/><path d="M267.6,498.2 L263.9,499.2" stroke="#111" stroke-width="2.0" fill="none"/><path d="M266.5,494.0 L262.0,492.0" stroke="#111" stroke-width="2.0" fill="none"/><path d="M267.6,489.8 L263.9,484.8" stroke="#111" stroke-width="2.0" fill="none"/><path d="M270.8,486.6 L269.2,479.4" stroke="#111" stroke-width="2.0" fill="none"/><path d="M275.0,485.5 L276.5,477.5" stroke="#111" stroke-width="2.0" fill="none"/><path d="M279.2,486.6 L283.8,479.4" stroke="#111" stroke-width="2.0" fill="none"/><path d="M282.4,489.8 L289.1,484.8" stroke="#111" stroke-width="2.0" fill="none"/><path d="M283.5,494.0 L291.0,492.0" stroke="#111" stroke-width="2.0" fill="none"/><path d="M282.4,498.2 L289.1,499.2" stroke="#111" stroke-width="2.0" fill="none"/><path d="M279.2,501.4 L283.8,504.6" stroke="#111" stroke-width="2.0" fill="none"/><path d="M275.0,502.5 L276.5,506.5" stroke="#111" stroke-width="2.0" fill="none"/><path d="M272.2,499.0 L270.8,501.4" stroke="#111" stroke-width="1.6" fill="none"/><path d="M270.6,496.6 L266.6,495.5" stroke="#111" stroke-width="1.6" fill="none"/><path d="M271.3,493.8 L268.5,488.5" stroke="#111" stroke-width="1.6" fill="none"/><path d="M274.0,492.5 L275.0,485.5" stroke="#111" stroke-width="1.6" fill="none"/><path d="M276.7,493.8 L281.5,488.5" stroke="#111" stroke-width="1.6" fill="none"/><path d="M277.4,496.6 L283.4,495.5" stroke="#111" stroke-width="1.6" fill="none"/><circle cx="273.5" cy="496.5" r="3.2" fill="#111"/><ellipse cx="327.5" cy="488.0" rx="10.8" ry="15.8" transform="rotate(0.0 327.5 488.0)" stroke="#111" stroke-width="2.6" fill="#fff"/><path d="M312,473 C309,492 317,505 327,509 C337,505 345,492 343,473" stroke="#111" stroke-width="2.2" fill="none"/><path d="M305,474 C301,498 313,514 327,519 C341,514 353,498 350,474" stroke="#111" stroke-width="1.8" fill="none"/><path d="M299,479 C295,502 308,519 320,524" stroke="#111" stroke-width="1.6" fill="none"/><path d="M355,477 C357,497 347,512 336,520" stroke="#111" stroke-width="1.6" fill="none"/><path d="M318,470 C322,475 333,475 337,470Z" fill="#111"/><ellipse cx="328" cy="521" rx="7.5" ry="4" fill="#111"/><path d="M300,507 L317,538 M301,522 L309,538" stroke="#111" stroke-width="1.6" fill="none"/><path d="M346,506 L366,474 M343,489 L355,469 M355,521 L366,503" stroke="#111" stroke-width="1.5" fill="none"/><path d="M333,532 C333,518 346,510 357,513 C366,518 367,532 362,537 L335,537Z" fill="#fff" stroke="#111" stroke-width="1.8"/><path d="M344,519 C350,514 358,518 360,526" stroke="#111" stroke-width="1.3" fill="none"/><path d="M316,537 C318,530 326,528 332,532" stroke="#111" stroke-width="1.5" fill="none"/><path d="M134,212.5 L146,212.5 C140,214 136,218 134,226Z" fill="#111"/></g><path d="M134,212.5 L367.5,212.5 L367.5,280 L204,280 L204,334.5 L290,334.5 L290,400 L204,400 L204,469 L367,469 L367,538.5 L134,538.5 Z" fill="none" stroke="#111" stroke-width="2.1" stroke-linejoin="round"/></svg>
<div class="a" style="left:476.3px;top:204px;width:322.7px;height:192.9px;border:1px solid #3a3a3a"></div>
<svg style="left:0;top:0" width="1024" height="640"><path d="M476.5 408.7H798.5" stroke="#555" stroke-width="1.3"/><path d="M476.5 434.8H798.5" stroke="#555" stroke-width="1.3"/><path d="M476.5 446.9H798.5" stroke="#555" stroke-width="1.3"/><path d="M476.5 472.9H798.5" stroke="#555" stroke-width="1.3"/><path d="M476.5 484.7H798.5" stroke="#555" stroke-width="1.3"/><path d="M476.5 510.4H798.5" stroke="#555" stroke-width="1.3"/><path d="M476.5 521.7H798.5" stroke="#555" stroke-width="1.3"/><path d="M476.5 547.7H798.5" stroke="#555" stroke-width="1.3"/><path d="M476.5 558.6H798.5" stroke="#555" stroke-width="1.3"/><path d="M476.5 584.3H798.5" stroke="#555" stroke-width="1.3"/><path d="M475.65 421.5H797" stroke="#4a4a4a" stroke-width="1.1" stroke-dasharray="1 2.7215"/><path d="M475.65 459.8H797" stroke="#4a4a4a" stroke-width="1.1" stroke-dasharray="1 2.7215"/><path d="M475.65 497.4H797" stroke="#4a4a4a" stroke-width="1.1" stroke-dasharray="1 2.7215"/><path d="M475.65 534.4H797" stroke="#4a4a4a" stroke-width="1.1" stroke-dasharray="1 2.7215"/><path d="M475.65 571.6H797" stroke="#4a4a4a" stroke-width="1.1" stroke-dasharray="1 2.7215"/><g fill="#111"><rect x="486.3" y="410.1" width="2.8" height="22"/><rect x="486.3" y="410.1" width="13.1" height="2.4"/><rect x="486.3" y="420.2" width="12.2" height="2.4"/><rect x="486.3" y="429.7" width="13.7" height="2.4"/></g></svg>
<div class="t" style="left:113px;top:564px;font-size:9.2px;color:#eee6d2;font-weight:normal;transform-origin:0 0;transform:scaleX(0.9841);letter-spacing:0.6px;">“What can separate us from His perfect love?”</div>
<div class="t" style="left:332px;top:562px;font-size:11px;color:#eee6d2;font-weight:normal;transform-origin:0 0;transform:scaleX(0.7076);font-style:italic;font-family:'Liberation Serif';">~ Romans 8:39</div>
<div class="a" style="left:0px;top:174.3px;width:24px;height:382px;background:#535353;border-radius:0 3px 0 0;box-shadow:0 0 0 0.5px #444"></div>
<div class="a" style="left:0px;top:174.3px;width:24px;height:8px;background:#474747;border-radius:0 3px 0 0"></div>
<svg style="left:3.5px;top:176.3px;" width="4.5" height="4.5" viewBox="0 0 4.5 4.5"><path d="M0.4 0.4l3.7 3.7M4.1 0.4L0.4 4.1" stroke="#d0d0d0" stroke-width="0.8"/></svg>
<svg style="left:16px;top:176.5px;" width="5" height="4" viewBox="0 0 5 4"><path d="M0.3 0.3L2 2 0.3 3.7M2.8 0.3L4.5 2 2.8 3.7" fill="none" stroke="#b0b0b0" stroke-width="0.7"/></svg>
<div class="a" style="left:6px;top:184.8px;width:12px;height:1.3px;background:#454545"></div>
<div class="a" style="left:4.1px;top:191.7px;width:16.5px;height:13.1px;background:#2f2f2f;border-radius:1.5px"></div>
<svg style="left:8px;top:193px;" width="9" height="11" viewBox="0 0 9 11"><path d="M0.8 0.8v9l2.4-2.3 1.6 3 1.2-0.6-1.6-2.9h3.3z" fill="none" stroke="#d8d8d8" stroke-width="0.9"/></svg>
<svg style="left:8px;top:207px;" width="9" height="11" viewBox="0 0 9 11"><path d="M0.8 0.8v9l2.4-2.3 1.6 3 1.2-0.6-1.6-2.9h3.3z" fill="#d8d8d8"/></svg>
<svg style="left:7px;top:221.5px;" width="11" height="11" viewBox="0 0 11 11"><path d="M0.5 0.5h4.5l2.5 2.5v3M0.5 0.5v9.5h5M5 0.5v2.5h2.5" fill="none" stroke="#d8d8d8" stroke-width="0.8"/><path d="M6 4.5v6l1.6-1.5 1 2 0.8-0.4-1-1.9h2.2z" fill="#d8d8d8"/></svg>
<svg style="left:6.5px;top:236px;" width="12" height="10" viewBox="0 0 12 10"><path d="M0.7 0.5v9M11.3 0.5v9M1.5 5h9M3.3 3.2L1.5 5l1.8 1.8M8.7 3.2L10.5 5 8.7 6.8" fill="none" stroke="#d8d8d8" stroke-width="0.9"/></svg>
<svg style="left:7px;top:249.5px;" width="12" height="12" viewBox="0 0 12 12"><path d="M0.5 4.5v7h9v-4" fill="none" stroke="#d8d8d8" stroke-width="0.9"/><path d="M2 11V8M4 11V6M6 11V8M8 11V5" stroke="#d8d8d8" stroke-width="1"/><path d="M3 0.5l3 3.5" stroke="#d8d8d8" stroke-width="1.2"/><path d="M11 10.2l1 1.3h-1.3z" fill="#d8d8d8"/></svg>
<svg style="left:6.5px;top:265.5px;" width="11" height="11" viewBox="0 0 11 11"><path d="M0.6 2.6V0.6h9.8v2M5.5 0.6v9.6M3.5 10.2h4" fill="none" stroke="#d8d8d8" stroke-width="1.3"/></svg>
<svg style="left:18.5px;top:274.5px;" width="2" height="2" viewBox="0 0 2 2"><path d="M0 2h2V0z" fill="#d8d8d8"/></svg>
<svg style="left:7px;top:280.5px;" width="11" height="11" viewBox="0 0 11 11"><path d="M0.5 10.5L10.5 0.5" stroke="#d8d8d8" stroke-width="1"/></svg>
<svg style="left:6.5px;top:296px;" width="12" height="12" viewBox="0 0 12 12"><path d="M1 11l1.5-4.5 5-5 3 3-5 5z" fill="none" stroke="#d8d8d8" stroke-width="0.9"/><circle cx="4.6" cy="7.4" r="0.9" fill="#d8d8d8"/><path d="M1 11l3-3" stroke="#d8d8d8" stroke-width="0.7"/><path d="M11 10.2l1 1.3h-1.3z" fill="#d8d8d8"/></svg>
<svg style="left:6.5px;top:310.5px;" width="12" height="12" viewBox="0 0 12 12"><path d="M0.8 11.2l0.8-3 7-7 2.2 2.2-7 7z" fill="#d8d8d8"/><path d="M11 10.2l1 1.3h-1.3z" fill="#d8d8d8"/></svg>
<svg style="left:6.5px;top:325.5px;" width="12" height="12" viewBox="0 0 12 12"><rect x="0.5" y="0.5" width="10" height="9.5" fill="none" stroke="#d8d8d8" stroke-width="0.9"/><path d="M0.5 0.5l10 9.5M10.5 0.5l-10 9.5" stroke="#d8d8d8" stroke-width="0.9"/><path d="M11 10.2l1 1.3h-1.3z" fill="#d8d8d8"/></svg>
<svg style="left:6.5px;top:340.5px;" width="12" height="11" viewBox="0 0 12 11"><ellipse cx="5.8" cy="5" rx="5.2" ry="4.2" fill="none" stroke="#d8d8d8" stroke-width="0.9"/><path d="M11 9.2l1 1.3h-1.3z" fill="#d8d8d8"/></svg>
<svg style="left:6.5px;top:355.5px;" width="12" height="12" viewBox="0 0 12 12"><g fill="none" stroke="#d8d8d8" stroke-width="0.9"><circle cx="2.5" cy="9" r="1.8"/><circle cx="9.5" cy="9" r="1.8"/><path d="M3.7 7.7L9.5 0.5M8.3 7.7L2.5 0.5"/></g></svg>
<svg style="left:6.5px;top:369.5px;" width="12" height="12" viewBox="0 0 12 12"><rect x="2" y="2" width="8" height="8" fill="none" stroke="#d8d8d8" stroke-width="0.8" stroke-dasharray="1.5 1"/><path d="M0.5 0.5v5l1.3-1.2 1 1.8 0.6-0.3-0.9-1.8h1.8z" fill="#d8d8d8"/><path d="M11 10.2l1 1.3h-1.3z" fill="#d8d8d8"/></svg>
<div class="a" style="left:7.2px;top:385.5px;width:10.5px;height:10.5px;background:linear-gradient(135deg,#f0f0f0,#303030);border:0.5px solid #999"></div>
<div class="a" style="left:7.2px;top:400.5px;width:10.5px;height:10.5px;background:linear-gradient(#303030,#f0f0f0);border:0.5px solid #999"></div>
<svg style="left:7px;top:416.5px;" width="11" height="12" viewBox="0 0 11 12"><path d="M0.5 0.5h9v7l-3 3h-6z" fill="#d8d8d8"/><path d="M2 3h6M2 5h6M2 7h4" stroke="#535353" stroke-width="0.8"/><path d="M7.5 10l3-3" stroke="#d8d8d8"/></svg>
<svg style="left:6.5px;top:430.5px;" width="12" height="12" viewBox="0 0 12 12"><path d="M1 11l0.6-2.6 5.5-5.5 2 2-5.5 5.5z" fill="none" stroke="#d8d8d8" stroke-width="0.9"/><path d="M6.4 2.5l1.2-1.2a1.4 1.4 0 0 1 2 0l0.6 0.6a1.4 1.4 0 0 1 0 2l-1.2 1.2z" fill="#d8d8d8"/><path d="M11 10.2l1 1.3h-1.3z" fill="#d8d8d8"/></svg>
<svg style="left:7px;top:445.5px;" width="11" height="12" viewBox="0 0 11 12"><path d="M2.5 11.5C1 9.5 0.5 7.5 1 6l1.3 1.5V2a0.8 0.8 0 0 1 1.6 0v4V1a0.8 0.8 0 0 1 1.6 0v5V1.5a0.8 0.8 0 0 1 1.6 0V6V3a0.8 0.8 0 0 1 1.6 0v5c0 1.5-0.5 2.5-1.5 3.5z" fill="none" stroke="#d8d8d8" stroke-width="0.8"/></svg>
<svg style="left:7px;top:460px;" width="11" height="12" viewBox="0 0 11 12"><circle cx="4.4" cy="4.4" r="3.6" fill="none" stroke="#d8d8d8" stroke-width="1"/><path d="M7 7l3.5 3.5" stroke="#d8d8d8" stroke-width="1.5"/></svg>
<div class="a" style="left:3px;top:473px;width:21px;height:0.8px;background:#4a4a4a"></div>
<svg style="left:3.1px;top:477.5px;" width="8" height="7.5" viewBox="0 0 8 7.5"><rect x="2.5" y="2.5" width="5" height="4.5" fill="#222" stroke="#ddd" stroke-width="0.8"/><rect x="0.4" y="0.4" width="4.5" height="4.5" fill="#fff" stroke="#555" stroke-width="0.6"/><path d="M0.5 4.8L4.8 0.5" stroke="#e8141b" stroke-width="1"/></svg>
<svg style="left:14.8px;top:477px;" width="7" height="8" viewBox="0 0 7 8"><path d="M0.5 2.5h4.5v4.5" fill="none" stroke="#bdbdbd" stroke-width="0.8"/><path d="M0.3 2.5l1.5-1.5v3zM5 7.7l-1.5-1.5h3z" fill="#bdbdbd"/></svg>
<div class="a" style="left:9.2px;top:493.2px;width:11.9px;height:12.8px;background:#fff;border:0.5px solid #888"></div>
<div class="a" style="left:11.7px;top:495.7px;width:6.9px;height:7.8px;background:#333"></div>
<svg style="left:9.2px;top:493.2px;" width="12" height="13" viewBox="0 0 12 13"><path d="M0.8 12.2L11.2 0.8" stroke="#e8141b" stroke-width="1.4"/></svg>
<div class="a" style="left:3.1px;top:488px;width:12.1px;height:11.9px;background:#bfe4f2;border:0.5px solid #777"></div>
<div class="a" style="left:4px;top:510.6px;width:7.5px;height:7px;border:0.8px solid #bdbdbd;border-radius:1px;background:#3a3a3a"></div>
<div class="t" style="left:15.2px;top:509.5px;font-size:9px;color:#d0d0d0;font-weight:normal;font-family:'Liberation Serif';font-weight:bold;">T</div>
<div class="a" style="left:4px;top:522px;width:16.8px;height:13px;background:#343434;border-radius:1.5px"></div>
<div class="a" style="left:7px;top:524.2px;width:9.6px;height:7.8px;background:#bfe4f2;border:0.5px solid #ccc"></div>
<svg style="left:18.3px;top:532.5px;" width="2" height="2" viewBox="0 0 2 2"><path d="M0 2h2V0z" fill="#ccc"/></svg>
<div class="a" style="left:4px;top:539.7px;width:16.8px;height:12.7px;background:#343434;border-radius:1.5px"></div>
<div class="a" style="left:8.7px;top:542.5px;width:7.5px;height:7.5px;border:0.8px solid #c8c8c8;background:linear-gradient(#3a3a3a 0 30%,#777 30%)"></div>
<svg style="left:18.3px;top:550px;" width="2" height="2" viewBox="0 0 2 2"><path d="M0 2h2V0z" fill="#ccc"/></svg>
<div class="a" style="left:866px;top:89px;width:9.5px;height:537px;background:#4b4b4b"></div>
<svg style="left:867.5px;top:92px;" width="7" height="5" viewBox="0 0 7 5"><path d="M0.5 4L3.5 1 6.5 4" fill="none" stroke="#8c8c8c" stroke-width="0.8"/></svg>
<div class="a" style="left:867.2px;top:156px;width:7px;height:15px;background:#6a6a6a;border-radius:3.5px"></div>
<svg style="left:867.5px;top:618px;" width="7" height="5" viewBox="0 0 7 5"><path d="M0.5 1L3.5 4 6.5 1" fill="none" stroke="#8c8c8c" stroke-width="0.8"/></svg>
<div class="a" style="left:875.5px;top:71px;width:148.5px;height:566px;background:#3e3e3e"></div>
<div class="a" style="left:876.8px;top:71px;width:147.2px;height:7.3px;background:#464646"></div>
<svg style="left:1015px;top:73.5px;" width="6" height="4" viewBox="0 0 6 4"><path d="M0.3 0.3L1.8 2 0.3 3.7M3 0.3L4.5 2 3 3.7" fill="none" stroke="#a8a8a8" stroke-width="0.6"/></svg>
<div class="a" style="left:876.8px;top:78.3px;width:147.2px;height:374px;background:#535353"></div>
<div class="a" style="left:915px;top:78.3px;width:109px;height:17.3px;background:#474747"></div>
<div class="a" style="left:876.8px;top:78.3px;width:38.2px;height:17.3px;background:#535353"></div>
<div class="a" style="left:951.2px;top:78.3px;width:0.8px;height:17.3px;background:#3f3f3f"></div>
<div class="a" style="left:984.6px;top:78.3px;width:0.8px;height:17.3px;background:#3f3f3f"></div>
<svg style="left:882px;top:83.5px;" width="3" height="7" viewBox="0 0 3 7"><path d="M1.5 0.3L2.8 2.5H0.2zM1.5 6.7L2.8 4.5H0.2z" fill="none" stroke="#aaa" stroke-width="0.5"/></svg>
<div class="t" style="left:888px;top:83.8px;font-size:7.2px;color:#f2f2f2;font-weight:bold;transform-origin:0 0;transform:scaleX(0.9440);">Pages</div>
<div class="t" style="left:922.3px;top:83.8px;font-size:7.2px;color:#cfcfcf;font-weight:bold;transform-origin:0 0;transform:scaleX(0.9531);">Layers</div>
<div class="t" style="left:959.8px;top:83.8px;font-size:7.2px;color:#cfcfcf;font-weight:bold;transform-origin:0 0;transform:scaleX(0.9424);">Links</div>
<svg style="left:1013.6px;top:85px;" width="7" height="5" viewBox="0 0 7 5"><rect x="0" y="0" width="7" height="5" fill="#8a8a8a"/><path d="M0 1.6h7M0 3.3h7" stroke="#474747" stroke-width="0.5"/></svg>
<div class="t" style="left:878.7px;top:100.5px;font-size:7px;color:#dedede;font-weight:normal;transform-origin:0 0;transform:scaleX(0.9503);">[None]</div>
<div class="a" style="left:998.6px;top:97.8px;width:11.4px;height:15.1px;background:#fff"></div>
<div class="t" style="left:878.7px;top:117.6px;font-size:7px;color:#dedede;font-weight:normal;transform-origin:0 0;transform:scaleX(0.9611);">A-Master</div>
<div class="a" style="left:987px;top:115.9px;width:23px;height:10.9px;background:#fff"></div>
<div class="a" style="left:998.2px;top:115.9px;width:0.6px;height:10.9px;background:#cfcfcf"></div>
<div class="a" style="left:1015px;top:95.6px;width:9px;height:32.3px;background:#4d4d4d"></div>
<svg style="left:1016.5px;top:98.5px;" width="6" height="4" viewBox="0 0 6 4"><path d="M0.5 3.5L3 1 5.5 3.5" fill="none" stroke="#8a8a8a" stroke-width="0.7"/></svg>
<svg style="left:1016.5px;top:121px;" width="6" height="4" viewBox="0 0 6 4"><path d="M0.5 0.5L3 3 5.5 0.5" fill="none" stroke="#8a8a8a" stroke-width="0.7"/></svg>
<div class="a" style="left:876.8px;top:127.6px;width:147.2px;height:1.6px;background:#444"></div>
<div class="a" style="left:1015px;top:129.2px;width:9px;height:307px;background:#4d4d4d"></div>
<svg style="left:1016.5px;top:131.5px;" width="6" height="4" viewBox="0 0 6 4"><path d="M0.5 3.5L3 1 5.5 3.5" fill="none" stroke="#8a8a8a" stroke-width="0.7"/></svg>
<div class="a" style="left:1016.8px;top:138px;width:5.5px;height:82px;background:#6b6b6b;border-radius:3px"></div>
<svg style="left:1016.5px;top:431.5px;" width="6" height="4" viewBox="0 0 6 4"><path d="M0.5 0.5L3 3 5.5 0.5" fill="none" stroke="#8a8a8a" stroke-width="0.7"/></svg>
<div class="a" style="left:945.4px;top:131px;width:1.3px;height:4px;background:#7c7c7c"></div>
<div class="a" style="left:945.4px;top:167.6px;width:1.3px;height:2.9000000000000057px;background:#7c7c7c"></div>
<div class="a" style="left:945.4px;top:179.5px;width:1.3px;height:5.699999999999989px;background:#7c7c7c"></div>
<div class="a" style="left:945.4px;top:218px;width:1.3px;height:4px;background:#7c7c7c"></div>
<div class="a" style="left:945.4px;top:230.5px;width:1.3px;height:5.300000000000011px;background:#7c7c7c"></div>
<div class="a" style="left:945.4px;top:268.6px;width:1.3px;height:3.8999999999999773px;background:#7c7c7c"></div>
<div class="a" style="left:945.4px;top:281px;width:1.3px;height:5.699999999999989px;background:#7c7c7c"></div>
<div class="a" style="left:945.4px;top:319px;width:1.3px;height:3.8000000000000114px;background:#7c7c7c"></div>
<div class="a" style="left:945.4px;top:331px;width:1.3px;height:5.899999999999977px;background:#7c7c7c"></div>
<div class="a" style="left:945.4px;top:369.7px;width:1.3px;height:4.300000000000011px;background:#7c7c7c"></div>
<div class="a" style="left:945.4px;top:382.5px;width:1.3px;height:5.5px;background:#7c7c7c"></div>
<div class="a" style="left:945.4px;top:420.3px;width:1.3px;height:3.6999999999999886px;background:#7c7c7c"></div>
<svg style="left:955.5px;top:131px;" width="6" height="3.5" viewBox="0 0 6 3.5"><path d="M0 0h6L3 3.5z" fill="#c8c8c8"/></svg>
<div class="a" style="left:946px;top:135px;width:26px;height:32.6px;background:#fff"></div>
<svg style="left:949px;top:140px;" width="20" height="24" viewBox="0 0 20 24"><defs><radialGradient id="gl" cx="0.4" cy="0.4" r="0.6"><stop offset="0" stop-color="#7fd0e0"/><stop offset="0.7" stop-color="#1a8fb3"/><stop offset="1" stop-color="#0d5f7a"/></radialGradient></defs><circle cx="10" cy="10.5" r="6.2" fill="url(#gl)"/><path d="M7 7c2 1 3 3 2 5s1 3 2 2" stroke="#5fb86a" stroke-width="1.6" fill="none"/><ellipse cx="10" cy="19.5" rx="5" ry="1.2" fill="#557b96" opacity="0.7"/><path d="M10 16.5v3" stroke="#333" stroke-width="0.8"/></svg>
<div class="t" style="left:966.6px;top:135.2px;font-size:7px;color:#111;font-weight:normal;">A</div>
<div class="t" style="left:956.8px;top:172.4px;font-size:6.6px;color:#d6d6d6;font-weight:normal;">1</div>
<div class="a" style="left:920.4px;top:185.2px;width:51.6px;height:32.8px;background:#fff"></div>
<svg style="left:920.4px;top:185.2px" width="52" height="33"></svg>
<div class="a" style="left:945.5px;top:185.2px;width:0.9px;height:32.8px;background:#d0d0d0"></div>
<div class="t" style="left:920.8px;top:185.5px;font-size:7px;color:#111;font-weight:normal;">A</div>
<div class="t" style="left:966.6px;top:185.5px;font-size:7px;color:#111;font-weight:normal;">A</div>
<div class="t" style="left:938.5px;top:223.8px;font-size:6.6px;color:#d6d6d6;font-weight:normal;transform-origin:0 0;transform:scaleX(1.4689);">2-3</div>
<div class="a" style="left:920.4px;top:235.8px;width:51.6px;height:32.8px;background:#fff"></div>
<svg style="left:920.4px;top:235.8px" width="52" height="33"><rect x="2" y="5.0" width="9.9" height="0.9" fill="#b8784a" opacity="0.8"/><rect x="2" y="6.7" width="12.4" height="0.9" fill="#b8784a" opacity="0.8"/><rect x="2" y="8.4" width="11.0" height="0.9" fill="#b8784a" opacity="0.8"/><rect x="2" y="10.1" width="12.8" height="0.9" fill="#b8784a" opacity="0.8"/><rect x="2" y="11.8" width="13.0" height="0.9" fill="#b8784a" opacity="0.8"/><rect x="2" y="13.5" width="8.5" height="0.9" fill="#b8784a" opacity="0.8"/><rect x="2" y="15.2" width="8.1" height="0.9" fill="#b8784a" opacity="0.8"/><rect x="2" y="16.9" width="14.7" height="0.9" fill="#b8784a" opacity="0.8"/><rect x="2" y="18.6" width="10.1" height="0.9" fill="#b8784a" opacity="0.8"/><rect x="2" y="20.3" width="9.9" height="0.9" fill="#b8784a" opacity="0.8"/><rect x="2" y="22.0" width="16.0" height="0.9" fill="#b8784a" opacity="0.8"/><rect x="2" y="23.7" width="11.8" height="0.9" fill="#b8784a" opacity="0.8"/><rect x="2" y="25.4" width="14.7" height="0.9" fill="#b8784a" opacity="0.8"/><rect x="2" y="27.1" width="11.8" height="0.9" fill="#b8784a" opacity="0.8"/><rect x="28" y="5.0" width="12.4" height="0.9" fill="#b8784a" opacity="0.8"/><rect x="28" y="7.0" width="7.5" height="0.9" fill="#b8784a" opacity="0.8"/><rect x="28" y="9.0" width="12.3" height="0.9" fill="#b8784a" opacity="0.8"/><rect x="28" y="11.0" width="14.7" height="0.9" fill="#b8784a" opacity="0.8"/><rect x="28" y="13.0" width="11.2" height="0.9" fill="#b8784a" opacity="0.8"/><rect x="28" y="15.0" width="13.4" height="0.9" fill="#b8784a" opacity="0.8"/><rect x="28" y="17.0" width="12.7" height="0.9" fill="#b8784a" opacity="0.8"/><rect x="28" y="19.0" width="6.6" height="0.9" fill="#b8784a" opacity="0.8"/><rect x="28" y="21.0" width="13.6" height="0.9" fill="#b8784a" opacity="0.8"/><rect x="28" y="23.0" width="11.9" height="0.9" fill="#b8784a" opacity="0.8"/><rect x="28" y="25.0" width="9.0" height="0.9" fill="#b8784a" opacity="0.8"/><rect x="28" y="27.0" width="6.3" height="0.9" fill="#b8784a" opacity="0.8"/></svg>
<div class="a" style="left:945.5px;top:235.8px;width:0.9px;height:32.8px;background:#d0d0d0"></div>
<div class="t" style="left:920.8px;top:236.10000000000002px;font-size:7px;color:#111;font-weight:normal;">A</div>
<div class="t" style="left:966.6px;top:236.10000000000002px;font-size:7px;color:#111;font-weight:normal;">A</div>
<div class="t" style="left:938.5px;top:274.2px;font-size:6.6px;color:#d6d6d6;font-weight:normal;transform-origin:0 0;transform:scaleX(1.4689);">4-5</div>
<div class="a" style="left:920.4px;top:286.7px;width:51.6px;height:32.8px;background:#fff"></div>
<svg style="left:920.4px;top:286.7px" width="52" height="33"><rect x="0" y="0" width="52" height="33" fill="#92c3f0"/><rect x="6" y="2.2" width="15" height="1.1" fill="#2a7fd0"/><rect x="30" y="2.2" width="15" height="1.1" fill="#2a7fd0"/><path d="M6.5,6.5 H19.5 V10 H10.5 V13.5 H15.5 V17 H10.5 V21 H19.5 V25 H6.5Z" fill="#6d93bd" stroke="#1d3557" stroke-width="0.6"/><path d="M10.5,10 H19.5 V13.5 H15.5 V17 H10.5 V21 H19.5" fill="none" stroke="#cfe3f7" stroke-width="0.3"/><rect x="28.5" y="6" width="18" height="11" fill="none" stroke="#2a4a6a" stroke-width="0.4"/><path d="M28.5 19.5h18" stroke="#2a4a6a" stroke-width="0.35"/><path d="M28.5 21.7h18" stroke="#2a4a6a" stroke-width="0.35"/><path d="M28.5 23.9h18" stroke="#2a4a6a" stroke-width="0.35"/><path d="M28.5 26.1h18" stroke="#2a4a6a" stroke-width="0.35"/><path d="M28.5 28.3h18" stroke="#2a4a6a" stroke-width="0.35"/></svg>
<div class="a" style="left:945.5px;top:286.7px;width:0.9px;height:32.8px;background:#d0d0d0"></div>
<div class="t" style="left:920.8px;top:287.0px;font-size:7px;color:#111;font-weight:normal;">A</div>
<div class="t" style="left:966.6px;top:287.0px;font-size:7px;color:#111;font-weight:normal;">A</div>
<div class="a" style="left:938px;top:323.40000000000003px;width:14.5px;height:6.8px;background:#1473e6"></div>
<div class="t" style="left:939.5px;top:324.2px;font-size:6.6px;color:#fff;font-weight:normal;transform-origin:0 0;transform:scaleX(1.2066);">6-7</div>
<div class="a" style="left:920.4px;top:336.9px;width:51.6px;height:32.8px;background:#fff"></div>
<svg style="left:920.4px;top:336.9px" width="52" height="33"><rect x="5" y="3" width="16" height="1.2" fill="#4aa8b8"/><rect x="31" y="3" width="15" height="1.2" fill="#4aa8b8"/><rect x="12.7" y="18.8" width="0.8" height="0.8" fill="#777"/><rect x="13.6" y="19.3" width="0.8" height="0.8" fill="#777"/><rect x="8.1" y="17.8" width="0.8" height="0.8" fill="#777"/><rect x="15.7" y="23.7" width="0.8" height="0.8" fill="#777"/><rect x="6.6" y="13.4" width="0.8" height="0.8" fill="#777"/><rect x="16.8" y="7.9" width="0.8" height="0.8" fill="#777"/><rect x="16.1" y="19.9" width="0.8" height="0.8" fill="#777"/><rect x="7.7" y="7.3" width="0.8" height="0.8" fill="#777"/><rect x="14.0" y="8.3" width="0.8" height="0.8" fill="#777"/><rect x="8.2" y="12.1" width="0.8" height="0.8" fill="#777"/><rect x="5.5" y="16.7" width="0.8" height="0.8" fill="#777"/><rect x="12.5" y="24.7" width="0.8" height="0.8" fill="#777"/><rect x="13.8" y="20.4" width="0.8" height="0.8" fill="#777"/><rect x="13.5" y="20.9" width="0.8" height="0.8" fill="#777"/><rect x="12.8" y="12.8" width="0.8" height="0.8" fill="#777"/><rect x="10.4" y="11.8" width="0.8" height="0.8" fill="#777"/><rect x="9.9" y="8.5" width="0.8" height="0.8" fill="#777"/><rect x="18.0" y="15.4" width="0.8" height="0.8" fill="#777"/><rect x="19.4" y="15.1" width="0.8" height="0.8" fill="#777"/><rect x="5.0" y="11.4" width="0.8" height="0.8" fill="#777"/><rect x="18.2" y="12.7" width="0.8" height="0.8" fill="#777"/><rect x="6.5" y="14.0" width="0.8" height="0.8" fill="#777"/><rect x="7.0" y="12.2" width="0.8" height="0.8" fill="#777"/><rect x="6.7" y="8.3" width="0.8" height="0.8" fill="#777"/><rect x="18.5" y="10.7" width="0.8" height="0.8" fill="#777"/><rect x="14.5" y="16.4" width="0.8" height="0.8" fill="#777"/><rect x="7.2" y="20.5" width="0.8" height="0.8" fill="#777"/><rect x="7.0" y="15.8" width="0.8" height="0.8" fill="#777"/><rect x="8.6" y="12.7" width="0.8" height="0.8" fill="#777"/><rect x="10.2" y="25.6" width="0.8" height="0.8" fill="#777"/><rect x="8.6" y="15.3" width="0.8" height="0.8" fill="#777"/><rect x="8.6" y="12.4" width="0.8" height="0.8" fill="#777"/><rect x="18.1" y="13.9" width="0.8" height="0.8" fill="#777"/><rect x="10.0" y="8.5" width="0.8" height="0.8" fill="#777"/><rect x="6.5" y="19.2" width="0.8" height="0.8" fill="#777"/><rect x="9.1" y="19.6" width="0.8" height="0.8" fill="#777"/><rect x="11.3" y="16.5" width="0.8" height="0.8" fill="#777"/><rect x="14.8" y="25.2" width="0.8" height="0.8" fill="#777"/><rect x="8.1" y="10.2" width="0.8" height="0.8" fill="#777"/><rect x="9.2" y="11.0" width="0.8" height="0.8" fill="#777"/><rect x="12.2" y="9.2" width="0.8" height="0.8" fill="#777"/><rect x="9.1" y="21.8" width="0.8" height="0.8" fill="#777"/><rect x="9.4" y="24.3" width="0.8" height="0.8" fill="#777"/><rect x="15.1" y="13.2" width="0.8" height="0.8" fill="#777"/><rect x="6.2" y="11.8" width="0.8" height="0.8" fill="#777"/><rect x="14.5" y="24.9" width="0.8" height="0.8" fill="#777"/><rect x="15.4" y="12.9" width="0.8" height="0.8" fill="#777"/><rect x="5.3" y="12.7" width="0.8" height="0.8" fill="#777"/><rect x="12.6" y="8.3" width="0.8" height="0.8" fill="#777"/><rect x="8.0" y="14.7" width="0.8" height="0.8" fill="#777"/><rect x="14.7" y="9.8" width="0.8" height="0.8" fill="#777"/><rect x="11.2" y="25.7" width="0.8" height="0.8" fill="#777"/><rect x="16.8" y="19.3" width="0.8" height="0.8" fill="#777"/><rect x="7.4" y="7.7" width="0.8" height="0.8" fill="#777"/><rect x="13.2" y="22.3" width="0.8" height="0.8" fill="#777"/><rect x="10.4" y="28.0" width="0.8" height="0.8" fill="#777"/><rect x="6.3" y="18.5" width="0.8" height="0.8" fill="#777"/><rect x="11.0" y="21.4" width="0.8" height="0.8" fill="#777"/><rect x="12.1" y="23.6" width="0.8" height="0.8" fill="#777"/><rect x="15.6" y="15.0" width="0.8" height="0.8" fill="#777"/><rect x="14.9" y="19.8" width="0.8" height="0.8" fill="#777"/><rect x="17.4" y="15.2" width="0.8" height="0.8" fill="#777"/><rect x="17.5" y="19.2" width="0.8" height="0.8" fill="#777"/><rect x="12.5" y="24.6" width="0.8" height="0.8" fill="#777"/><rect x="13.2" y="11.8" width="0.8" height="0.8" fill="#777"/><rect x="16.9" y="17.4" width="0.8" height="0.8" fill="#777"/><rect x="15.4" y="26.3" width="0.8" height="0.8" fill="#777"/><rect x="9.3" y="7.2" width="0.8" height="0.8" fill="#777"/><rect x="10.1" y="21.2" width="0.8" height="0.8" fill="#777"/><rect x="8.4" y="10.6" width="0.8" height="0.8" fill="#777"/><rect x="12.5" y="25.7" width="0.8" height="0.8" fill="#777"/><rect x="10.6" y="21.0" width="0.8" height="0.8" fill="#777"/><rect x="8.4" y="16.0" width="0.8" height="0.8" fill="#777"/><rect x="14.9" y="13.6" width="0.8" height="0.8" fill="#777"/><rect x="7.3" y="17.4" width="0.8" height="0.8" fill="#777"/><rect x="9.7" y="10.6" width="0.8" height="0.8" fill="#777"/><rect x="12.7" y="12.8" width="0.8" height="0.8" fill="#777"/><rect x="8.6" y="15.7" width="0.8" height="0.8" fill="#777"/><rect x="15.6" y="17.4" width="0.8" height="0.8" fill="#777"/><rect x="10.4" y="24.6" width="0.8" height="0.8" fill="#777"/><rect x="49.6" y="15.0" width="0.8" height="0.8" fill="#777"/><rect x="43.9" y="17.4" width="0.8" height="0.8" fill="#777"/><rect x="46.4" y="10.7" width="0.8" height="0.8" fill="#777"/><rect x="42.2" y="14.9" width="0.8" height="0.8" fill="#777"/><rect x="42.2" y="19.1" width="0.8" height="0.8" fill="#777"/><rect x="43.4" y="10.0" width="0.8" height="0.8" fill="#777"/><rect x="39.0" y="9.6" width="0.8" height="0.8" fill="#777"/><rect x="44.0" y="9.6" width="0.8" height="0.8" fill="#777"/><rect x="34.7" y="12.9" width="0.8" height="0.8" fill="#777"/><rect x="43.6" y="16.4" width="0.8" height="0.8" fill="#777"/><rect x="31.7" y="15.1" width="0.8" height="0.8" fill="#777"/><rect x="36.9" y="17.4" width="0.8" height="0.8" fill="#777"/><rect x="48.8" y="15.3" width="0.8" height="0.8" fill="#777"/><rect x="42.7" y="10.1" width="0.8" height="0.8" fill="#777"/><rect x="42.5" y="20.4" width="0.8" height="0.8" fill="#777"/><rect x="47.0" y="13.0" width="0.8" height="0.8" fill="#777"/><rect x="30.7" y="14.8" width="0.8" height="0.8" fill="#777"/><rect x="45.8" y="9.5" width="0.8" height="0.8" fill="#777"/><rect x="39.8" y="20.5" width="0.8" height="0.8" fill="#777"/><rect x="48.9" y="15.9" width="0.8" height="0.8" fill="#777"/><rect x="33.6" y="16.5" width="0.8" height="0.8" fill="#777"/><rect x="42.4" y="16.5" width="0.8" height="0.8" fill="#777"/><rect x="46.7" y="17.2" width="0.8" height="0.8" fill="#777"/><rect x="35.5" y="13.6" width="0.8" height="0.8" fill="#777"/><rect x="49.3" y="16.5" width="0.8" height="0.8" fill="#777"/><rect x="41.0" y="10.0" width="0.8" height="0.8" fill="#777"/><rect x="40.3" y="16.1" width="0.8" height="0.8" fill="#777"/><rect x="49.4" y="16.3" width="0.8" height="0.8" fill="#777"/><rect x="40.8" y="15.8" width="0.8" height="0.8" fill="#777"/><rect x="40.3" y="14.3" width="0.8" height="0.8" fill="#777"/><rect x="34.7" y="15.5" width="0.8" height="0.8" fill="#777"/><rect x="31.7" y="14.7" width="0.8" height="0.8" fill="#777"/><rect x="39.0" y="12.3" width="0.8" height="0.8" fill="#777"/><rect x="33.0" y="18.4" width="0.8" height="0.8" fill="#777"/><rect x="33.1" y="10.5" width="0.8" height="0.8" fill="#777"/><rect x="43.4" y="12.4" width="0.8" height="0.8" fill="#777"/><rect x="36.5" y="18.4" width="0.8" height="0.8" fill="#777"/><rect x="31.6" y="16.2" width="0.8" height="0.8" fill="#777"/><rect x="34.3" y="10.0" width="0.8" height="0.8" fill="#777"/><rect x="40.1" y="14.7" width="0.8" height="0.8" fill="#777"/><rect x="36.9" y="14.3" width="0.8" height="0.8" fill="#777"/><rect x="40.1" y="9.2" width="0.8" height="0.8" fill="#777"/><rect x="33.3" y="18.6" width="0.8" height="0.8" fill="#777"/><rect x="42.4" y="16.6" width="0.8" height="0.8" fill="#777"/><rect x="46.9" y="18.2" width="0.8" height="0.8" fill="#777"/><rect x="47.0" y="10.7" width="0.8" height="0.8" fill="#777"/><rect x="48.0" y="12.3" width="0.8" height="0.8" fill="#777"/><rect x="46.5" y="14.4" width="0.8" height="0.8" fill="#777"/><rect x="45.6" y="8.5" width="0.8" height="0.8" fill="#777"/><rect x="37.5" y="19.7" width="0.8" height="0.8" fill="#777"/><rect x="39.6" y="19.7" width="0.8" height="0.8" fill="#777"/><rect x="40.6" y="16.3" width="0.8" height="0.8" fill="#777"/><rect x="40.9" y="8.9" width="0.8" height="0.8" fill="#777"/><rect x="32.9" y="10.1" width="0.8" height="0.8" fill="#777"/><rect x="35.9" y="15.3" width="0.8" height="0.8" fill="#777"/><rect x="39.8" y="14.6" width="0.8" height="0.8" fill="#777"/><rect x="32.8" y="15.1" width="0.8" height="0.8" fill="#777"/><rect x="44.5" y="14.1" width="0.8" height="0.8" fill="#777"/><rect x="33.1" y="9.3" width="0.8" height="0.8" fill="#777"/><rect x="42.2" y="14.1" width="0.8" height="0.8" fill="#777"/><rect x="41.6" y="16.1" width="0.8" height="0.8" fill="#777"/><rect x="46.1" y="14.1" width="0.8" height="0.8" fill="#777"/><rect x="45.1" y="14.1" width="0.8" height="0.8" fill="#777"/><rect x="36.2" y="15.4" width="0.8" height="0.8" fill="#777"/><rect x="42.4" y="18.5" width="0.8" height="0.8" fill="#777"/><rect x="43.0" y="12.8" width="0.8" height="0.8" fill="#777"/><rect x="42.9" y="17.4" width="0.8" height="0.8" fill="#777"/><rect x="40.2" y="13.8" width="0.8" height="0.8" fill="#777"/><rect x="41.9" y="20.8" width="0.8" height="0.8" fill="#777"/><rect x="34.4" y="14.0" width="0.8" height="0.8" fill="#777"/><circle cx="45" cy="14" r="1.8" fill="none" stroke="#7bc77e" stroke-width="0.7"/><rect x="5" y="22" width="8" height="7" fill="#d5e6ea"/></svg>
<div class="a" style="left:945.5px;top:336.9px;width:0.9px;height:32.8px;background:#d0d0d0"></div>
<div class="t" style="left:920.8px;top:337.2px;font-size:7px;color:#111;font-weight:normal;">A</div>
<div class="t" style="left:966.6px;top:337.2px;font-size:7px;color:#111;font-weight:normal;">A</div>
<div class="t" style="left:938.5px;top:375.4px;font-size:6.6px;color:#d6d6d6;font-weight:normal;transform-origin:0 0;transform:scaleX(1.4689);">8-9</div>
<div class="a" style="left:920.4px;top:388px;width:51.6px;height:32.8px;background:#fff"></div>
<svg style="left:920.4px;top:388px" width="52" height="33"><rect x="4" y="2" width="18" height="0.8" fill="#d9742e"/><rect x="30" y="2" width="18" height="0.8" fill="#d9742e"/><circle cx="14" cy="12" r="7" fill="#2e7fc8"/><circle cx="14" cy="24.5" r="7" fill="#2e9fd0"/><circle cx="11" cy="10" r="2.5" fill="#3aa0e0"/><circle cx="17" cy="14" r="2" fill="#1c5fa0"/><circle cx="11" cy="26" r="2.6" fill="#58c070" opacity="0.8"/><circle cx="17" cy="22" r="2" fill="#f0c040" opacity="0.7"/><circle cx="22.5" cy="12.0" r="1.2" fill="#e0602a" opacity="0.8"/><circle cx="20.5" cy="17.5" r="1.2" fill="#e0602a" opacity="0.8"/><circle cx="15.5" cy="20.4" r="1.2" fill="#e0602a" opacity="0.8"/><circle cx="9.8" cy="19.4" r="1.2" fill="#e0602a" opacity="0.8"/><circle cx="6.0" cy="14.9" r="1.2" fill="#e0602a" opacity="0.8"/><circle cx="6.0" cy="9.1" r="1.2" fill="#e0602a" opacity="0.8"/><circle cx="9.7" cy="4.6" r="1.2" fill="#e0602a" opacity="0.8"/><circle cx="15.5" cy="3.6" r="1.2" fill="#e0602a" opacity="0.8"/><circle cx="20.5" cy="6.5" r="1.2" fill="#e0602a" opacity="0.8"/><path d="M30 5h18M32 5v24h14V5M34 12c3 4 8 4 11 0M36 20l2 8M42 20l2 8" fill="none" stroke="#444" stroke-width="0.6"/></svg>
<div class="a" style="left:945.5px;top:388px;width:0.9px;height:32.8px;background:#d0d0d0"></div>
<div class="t" style="left:920.8px;top:388.3px;font-size:7px;color:#111;font-weight:normal;">A</div>
<div class="t" style="left:966.6px;top:388.3px;font-size:7px;color:#111;font-weight:normal;">A</div>
<div class="a" style="left:876.8px;top:431px;width:138.2px;height:6.2px;background:#535353"></div>
<div class="a" style="left:932px;top:425.6px;width:30px;height:4.6px;overflow:hidden"><div class="t" style="left:3.5px;top:0.5px;font-size:6.5px;color:#d6d6d6">10–11</div></div>
<div class="a" style="left:876.8px;top:437.2px;width:147.2px;height:15.2px;background:#535353;border-top:1px solid #4a4a4a"></div>
<div class="t" style="left:880.5px;top:442.0px;font-size:7.0px;color:#ececec;font-weight:bold;transform-origin:0 0;transform:scaleX(0.8827);">54 Pages in 28 Spreads</div>
<svg style="left:966px;top:440.5px;" width="14" height="9" viewBox="0 0 14 9"><g fill="none" stroke="#a8a8a8" stroke-width="0.8"><rect x="0.5" y="3" width="5.5" height="5.5"/><path d="M2.5 3V0.5h5.5v5.5H6"/></g><circle cx="9" cy="8.4" r="0.5" fill="#c8c8c8"/></svg>
<svg style="left:985.3px;top:440.5px;" width="8" height="9" viewBox="0 0 8 9"><path d="M0.5 0.5h5l2 2v6h-7z" fill="#c8c8c8"/><path d="M5.5 0.5v2h2" fill="#888"/></svg>
<svg style="left:1002px;top:440.5px;" width="7" height="9" viewBox="0 0 7 9"><g fill="none" stroke="#c8c8c8" stroke-width="0.8"><path d="M0 1.5h7M2.5 1.5V0.4h2v1.1M1 1.5l0.6 7h3.8l0.6-7M2.8 3v4M4.2 3v4"/></g></svg>
<div class="a" style="left:876.8px;top:452.4px;width:147.2px;height:2.2px;background:#3e3e3e"></div>
<div class="a" style="left:876.8px;top:454.5px;width:147.2px;height:182px;background:#535353"></div>
<div class="a" style="left:913px;top:454.5px;width:111px;height:16.3px;background:#474747"></div>
<div class="a" style="left:962.6px;top:454.5px;width:0.8px;height:16.3px;background:#3f3f3f"></div>
<svg style="left:882px;top:459.5px;" width="3" height="7" viewBox="0 0 3 7"><path d="M1.5 0.3L2.8 2.5H0.2zM1.5 6.7L2.8 4.5H0.2z" fill="none" stroke="#aaa" stroke-width="0.5"/></svg>
<div class="t" style="left:888px;top:459.5px;font-size:7.2px;color:#f2f2f2;font-weight:bold;transform-origin:0 0;transform:scaleX(1.0296);">Align</div>
<div class="t" style="left:920.4px;top:459.5px;font-size:7.2px;color:#cfcfcf;font-weight:bold;transform-origin:0 0;transform:scaleX(1.0015);">Pathfinder</div>
<svg style="left:1013.5px;top:460.5px;" width="7" height="5" viewBox="0 0 7 5"><rect x="0" y="0" width="7" height="5" fill="#8a8a8a"/><path d="M0 1.6h7M0 3.3h7" stroke="#474747" stroke-width="0.5"/></svg>
<div class="t" style="left:880.4px;top:477.6px;font-size:6.8px;color:#ececec;font-weight:bold;transform-origin:0 0;transform:scaleX(0.8811);">Align Objects:</div>
<svg style="left:882.8px;top:492.5px;" width="10" height="10" viewBox="0 0 10 10"><path d="M1 0v10" stroke="#c8c8c8"/><rect x="2" y="2" width="5" height="2.3" fill="#c8c8c8"/><rect x="2" y="5.7" width="7.5" height="2.3" fill="#c8c8c8"/></svg>
<svg style="left:905px;top:492.5px;" width="10" height="10" viewBox="0 0 10 10"><path d="M5 0v10" stroke="#c8c8c8"/><rect x="2.5" y="2" width="5" height="2.3" fill="#c8c8c8"/><rect x="1.2" y="5.7" width="7.6" height="2.3" fill="#c8c8c8"/></svg>
<svg style="left:927.3px;top:492.5px;" width="10" height="10" viewBox="0 0 10 10"><path d="M9 0v10" stroke="#c8c8c8"/><rect x="3" y="2" width="5" height="2.3" fill="#c8c8c8"/><rect x="0.5" y="5.7" width="7.5" height="2.3" fill="#c8c8c8"/></svg>
<svg style="left:963px;top:492.5px;" width="10" height="10" viewBox="0 0 10 10"><path d="M0 1h10" stroke="#c8c8c8"/><rect x="2" y="2" width="2.3" height="7.5" fill="#c8c8c8"/><rect x="5.7" y="2" width="2.3" height="5" fill="#c8c8c8"/></svg>
<svg style="left:985.2px;top:492.5px;" width="10" height="10" viewBox="0 0 10 10"><path d="M0 5h10" stroke="#c8c8c8"/><rect x="2" y="1.2" width="2.3" height="7.6" fill="#c8c8c8"/><rect x="5.7" y="2.5" width="2.3" height="5" fill="#c8c8c8"/></svg>
<svg style="left:1007.4px;top:492.5px;" width="10" height="10" viewBox="0 0 10 10"><path d="M0 9h10" stroke="#c8c8c8"/><rect x="2" y="0.5" width="2.3" height="7.5" fill="#c8c8c8"/><rect x="5.7" y="3" width="2.3" height="5" fill="#c8c8c8"/></svg>
<div class="t" style="left:880.4px;top:516.6px;font-size:6.8px;color:#ececec;font-weight:bold;transform-origin:0 0;transform:scaleX(0.8929);">Distribute Objects:</div>
<svg style="left:882.8px;top:531px;" width="10" height="10" viewBox="0 0 10 10"><path d="M0 1h10M0 5.5h10" stroke="#c8c8c8" stroke-width="0.8"/><rect x="1.5" y="2" width="7" height="2.3" fill="#c8c8c8"/><rect x="1.5" y="6.5" width="7" height="2.5" fill="#c8c8c8"/></svg>
<svg style="left:905px;top:531px;" width="10" height="10" viewBox="0 0 10 10"><path d="M0 3h10M0 7.5h10" stroke="#c8c8c8" stroke-width="0.8"/><rect x="1.5" y="1.8" width="7" height="2.3" fill="#c8c8c8"/><rect x="1.5" y="6.3" width="7" height="2.5" fill="#c8c8c8"/></svg>
<svg style="left:927.3px;top:531px;" width="10" height="10" viewBox="0 0 10 10"><path d="M0 4.5h10M0 9h10" stroke="#c8c8c8" stroke-width="0.8"/><rect x="1.5" y="1.5" width="7" height="2.5" fill="#c8c8c8"/><rect x="1.5" y="6" width="7" height="2.5" fill="#c8c8c8"/></svg>
<svg style="left:963px;top:531px;" width="10" height="10" viewBox="0 0 10 10"><path d="M1 0v10M5.5 0v10" stroke="#c8c8c8" stroke-width="0.8"/><rect x="2" y="1.5" width="2.3" height="7" fill="#c8c8c8"/><rect x="6.5" y="2.5" width="2.5" height="5" fill="#c8c8c8"/></svg>
<svg style="left:985.2px;top:531px;" width="10" height="10" viewBox="0 0 10 10"><path d="M3 0v10M7.5 0v10" stroke="#c8c8c8" stroke-width="0.8"/><rect x="1.8" y="1.5" width="2.3" height="7" fill="#c8c8c8"/><rect x="6.3" y="2.5" width="2.5" height="5" fill="#c8c8c8"/></svg>
<svg style="left:1007.4px;top:531px;" width="10" height="10" viewBox="0 0 10 10"><path d="M4.5 0v10M9 0v10" stroke="#c8c8c8" stroke-width="0.8"/><rect x="1.5" y="1.5" width="2.3" height="7" fill="#c8c8c8"/><rect x="5.8" y="2.5" width="2.5" height="5" fill="#c8c8c8"/></svg>
<div class="a" style="left:881.3px;top:550.9px;width:6px;height:6px;border:0.8px solid #bdbdbd;border-radius:1px"></div>
<div class="t" style="left:891.7px;top:550.5px;font-size:6.8px;color:#e6e6e6;font-weight:bold;transform-origin:0 0;transform:scaleX(0.8653);">Use Spacing</div>
<div class="a" style="left:933.8px;top:547.4px;width:50.4px;height:12.5px;background:#4c4c4c;border-radius:1.5px"></div>
<div class="a" style="left:933.8px;top:547.4px;width:8.5px;height:12.5px;background:#505050"></div>
<svg style="left:934.5px;top:548.4px;" width="7" height="10" viewBox="0 0 7 10"><path d="M1.5 3.5L3.5 1.5 5.5 3.5M1.5 6.5L3.5 8.5 5.5 6.5" fill="none" stroke="#9a9a9a" stroke-width="0.8"/></svg>
<div class="t" style="left:947px;top:550.6999999999999px;font-size:6.8px;color:#707070;font-weight:normal;transform-origin:0 0;transform:scaleX(0.9697);">0p0</div>
<div class="t" style="left:900.6px;top:568.5px;font-size:6.8px;color:#e6e6e6;font-weight:bold;transform-origin:0 0;transform:scaleX(0.9222);">Align To:</div>
<svg style="left:935.3px;top:566.5px;" width="13" height="10" viewBox="0 0 13 10"><rect x="0.5" y="0.5" width="8.5" height="8.5" fill="none" stroke="#c8c8c8" stroke-width="0.8" stroke-dasharray="1.5 1"/><path d="M10 7.5l1.2 1.3 1.2-1.3z" fill="#c8c8c8"/></svg>
<div class="a" style="left:880px;top:581.5px;width:140px;height:0.8px;background:#5c5c5c"></div>
<div class="t" style="left:880.4px;top:589.4px;font-size:6.8px;color:#ececec;font-weight:bold;transform-origin:0 0;transform:scaleX(0.8907);">Distribute Spacing:</div>
<svg style="left:882.8px;top:604.6px;" width="10" height="10" viewBox="0 0 10 10"><path d="M1 3v5" stroke="#c8c8c8" stroke-width="0.7"/><rect x="3" y="1" width="6" height="3" fill="#c8c8c8"/><rect x="3" y="5.5" width="7" height="3" fill="#c8c8c8"/></svg>
<svg style="left:905px;top:604.6px;" width="10" height="10" viewBox="0 0 10 10"><path d="M3 0.5h3" stroke="#c8c8c8" stroke-width="0.7"/><rect x="1" y="2" width="3" height="7" fill="#c8c8c8"/><rect x="5.5" y="2.5" width="3" height="5" fill="#c8c8c8"/></svg>
<div class="a" style="left:881.3px;top:623.6px;width:6px;height:6px;border:0.8px solid #bdbdbd;border-radius:1px"></div>
<div class="t" style="left:891.7px;top:623.2px;font-size:6.8px;color:#e6e6e6;font-weight:bold;transform-origin:0 0;transform:scaleX(0.8653);">Use Spacing</div>
<div class="a" style="left:933.8px;top:620.1px;width:50.4px;height:12.5px;background:#4c4c4c;border-radius:1.5px"></div>
<div class="a" style="left:933.8px;top:620.1px;width:8.5px;height:12.5px;background:#505050"></div>
<svg style="left:934.5px;top:621.1px;" width="7" height="10" viewBox="0 0 7 10"><path d="M1.5 3.5L3.5 1.5 5.5 3.5M1.5 6.5L3.5 8.5 5.5 6.5" fill="none" stroke="#9a9a9a" stroke-width="0.8"/></svg>
<div class="t" style="left:947px;top:623.4px;font-size:6.8px;color:#707070;font-weight:normal;transform-origin:0 0;transform:scaleX(0.9697);">0p0</div>
<div class="a" style="left:0px;top:626.6px;width:875.5px;height:9.9px;background:#4b4b4b"></div>
<svg style="left:6.8px;top:628.5px;" width="6" height="6" viewBox="0 0 6 6"><path d="M0.5 0v6" stroke="#b8b8b8" stroke-width="0.9"/><path d="M5.5 0.5v5L1.5 3z" fill="#b8b8b8"/></svg>
<svg style="left:20.5px;top:628.5px;" width="4" height="6" viewBox="0 0 4 6"><path d="M3.5 0.5v5L0.5 3z" fill="#b8b8b8"/></svg>
<div class="a" style="left:32.3px;top:627.3px;width:43px;height:8.8px;background:#3b3b3b"></div>
<div class="t" style="left:34.2px;top:628.2px;font-size:7.4px;color:#e8e8e8;font-weight:normal;">6</div>
<div class="a" style="left:75.2px;top:627.3px;width:10px;height:8.8px;background:#4d4d4d"></div>
<svg style="left:77.5px;top:630px;" width="6" height="4" viewBox="0 0 6 4"><path d="M0.6 0.6L3 3 5.4 0.6" fill="none" stroke="#c8c8c8" stroke-width="1.0"/></svg>
<svg style="left:94.3px;top:628.5px;" width="4" height="6" viewBox="0 0 4 6"><path d="M0.5 0.5v5L3.5 3z" fill="#b8b8b8"/></svg>
<svg style="left:105.8px;top:628.5px;" width="6" height="6" viewBox="0 0 6 6"><path d="M0.5 0.5v5L4.5 3z" fill="#b8b8b8"/><path d="M5.5 0v6" stroke="#b8b8b8" stroke-width="0.9"/></svg>
<svg style="left:121px;top:627.5px;" width="11" height="8.5" viewBox="0 0 11 8.5"><path d="M1.2 7.8V5.2A3.8 3.8 0 0 1 8.8 5.2V7.8" fill="none" stroke="#c8c8c8" stroke-width="1.3"/><path d="M5 2.5l1.5 3" stroke="#c8c8c8" stroke-width="0.9"/><path d="M9.5 8h1.3" stroke="#c8c8c8" stroke-width="0.7"/></svg>
<div class="t" style="left:140.8px;top:628.2px;font-size:7.2px;color:#e0e0e0;font-weight:normal;transform-origin:0 0;transform:scaleX(0.9111);">[Basic] (working)</div>
<svg style="left:201px;top:630px;" width="6" height="4" viewBox="0 0 6 4"><path d="M0.6 0.6L3 3 5.4 0.6" fill="none" stroke="#c8c8c8" stroke-width="1.0"/></svg>
<div class="a" style="left:218.2px;top:628.3px;width:5.6px;height:5.6px;background:#e5242a;border-radius:50%"></div>
<div class="t" style="left:227.5px;top:628.2px;font-size:7.2px;color:#e8e8e8;font-weight:normal;transform-origin:0 0;transform:scaleX(0.9317);">21 errors</div>
<svg style="left:264px;top:630px;" width="6" height="4" viewBox="0 0 6 4"><path d="M0.6 0.6L3 3 5.4 0.6" fill="none" stroke="#c8c8c8" stroke-width="1.0"/></svg>
<svg style="left:277.5px;top:629px;" width="4" height="5" viewBox="0 0 4 5"><path d="M3 0.5L1 2.5 3 4.5" fill="none" stroke="#9a9a9a" stroke-width="0.8"/></svg>
<div class="a" style="left:273.6px;top:626.6px;width:570px;height:9.9px;background:#484848"></div>
<div class="a" style="left:409.4px;top:627.5px;width:303.6px;height:8px;background:#6b6b6b;border-radius:4px"></div>
<svg style="left:846px;top:628.8px;" width="4" height="5" viewBox="0 0 4 5"><path d="M1 0.5L3 2.5 1 4.5" fill="none" stroke="#8a8a8a" stroke-width="0.7"/></svg>
<svg style="left:855.3px;top:627.8px;" width="9.5" height="7.5" viewBox="0 0 9.5 7.5"><rect x="0.5" y="0.5" width="8.5" height="6.5" fill="none" stroke="#cfcfcf" stroke-width="0.9"/><path d="M4.75 0.5v6.5" stroke="#cfcfcf" stroke-width="0.9"/></svg>
<div class="a" style="left:0px;top:636.4px;width:1024px;height:3.6px;background:#1d1f1c"></div></body></html>
